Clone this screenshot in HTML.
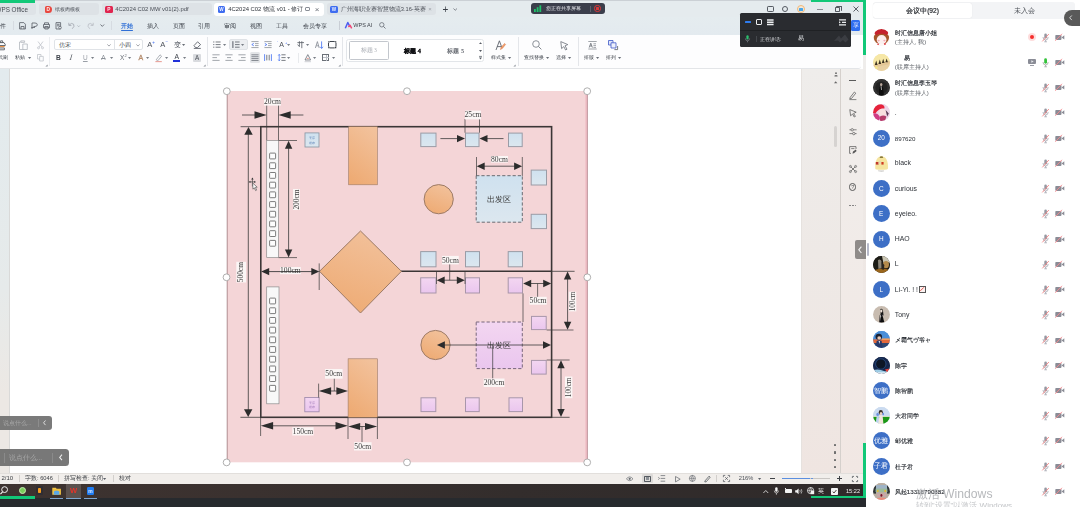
<!DOCTYPE html>
<html lang="zh"><head><meta charset="utf-8"><title>WPS - screen share</title>
<style>
html,body{margin:0;padding:0;}
body{width:1080px;height:507px;overflow:hidden;position:relative;background:#fff;font-family:"Liberation Sans", sans-serif;}
div,svg,span.a{position:absolute;box-sizing:border-box;}
svg{overflow:visible;}
.t{white-space:nowrap;}
#root{left:0;top:0;width:1080px;height:507px;filter:blur(0.5px);}
</style></head><body><div id="root">
<div style="left:-10px;top:-10px;width:873px;height:27px;background:#e5ebee;"></div><div style="left:-10px;top:17px;width:873px;height:17.5px;background:linear-gradient(#e5ecef,#e3eaef);"></div><div style="left:-10px;top:34.5px;width:871px;height:34.5px;background:#fdfdfe;border-bottom:1px solid #e3e5e8;border-radius:0 0 3px 0;"></div><div style="left:-10px;top:69px;width:873px;height:404px;background:#ffffff;"></div><div style="left:-10px;top:69px;width:20px;height:404px;background:linear-gradient(#e3ebee,#e6eaea 55%,#ece8e4 80%,#ece8e4);border-right:1px solid #d9d9d8;"></div><div style="left:801px;top:69px;width:39px;height:404px;background:linear-gradient(#efedeb,#eee9e6 45%,#efe5e1);border-left:1px solid #e6e2df;"></div><div style="left:839.5px;top:69px;width:23.5px;height:404px;background:linear-gradient(#f1efed,#f1ebe8 45%,#f1e7e3);border-left:1px solid #d5d0cc;"></div><div style="left:863px;top:55px;width:3px;height:390px;background:linear-gradient(#efedeb,#eee8e5 45%,#efe5e1);"></div><div style="left:-10px;top:2.9px;width:45.8px;height:12.6px;background:#dee3e7;border-radius:0 3px 3px 0;"></div><div class="t" style="top:4.65px;height:9.3px;line-height:9.3px;font-size:6.3px;color:#454a52;white-space:nowrap;left:-4.5px;">WPS Office</div><div style="left:39.2px;top:2.9px;width:59.5px;height:12.6px;background:#dde2e6;border-radius:3px;"></div><div style="left:45px;top:5.6px;width:6.6px;height:7.8px;background:#e8473f;border-radius:1.5px 3.5px 3.5px 1.5px;"></div><div class="t" style="top:5.70px;height:7.8px;line-height:7.8px;font-size:4.8px;color:#ffe9e6;white-space:nowrap;font-weight:bold;left:48.3px;transform:translateX(-50%);">D</div><div class="t" style="top:5.30px;height:8.4px;line-height:8.4px;font-size:5.4px;color:#4a4f57;white-space:nowrap;left:55px;">纸板肉模板</div><div style="left:101.8px;top:2.9px;width:110.2px;height:12.6px;background:#dde2e6;border-radius:3px;"></div><div style="left:105px;top:5.5px;width:7.5px;height:7.9px;background:#e0254f;border-radius:1.5px;"></div><div class="t" style="top:5.70px;height:7.8px;line-height:7.8px;font-size:4.8px;color:#ffe3ea;white-space:nowrap;font-weight:bold;left:108.8px;transform:translateX(-50%);">P</div><div class="t" style="top:5.05px;height:8.9px;line-height:8.9px;font-size:5.9px;color:#4a4f57;white-space:nowrap;left:115.3px;">4C2024 C02 MW v01(2).pdf</div><div style="left:214.2px;top:3px;width:110px;height:13.2px;background:#ffffff;border-radius:3px;"></div><div style="left:217.5px;top:5.8px;width:7.5px;height:7.4px;background:#3f6df0;border-radius:1.5px;"></div><div class="t" style="top:5.80px;height:7.6px;line-height:7.6px;font-size:4.6px;color:#eef2ff;white-space:nowrap;font-weight:bold;left:221.3px;transform:translateX(-50%);">W</div><div class="t" style="top:5.05px;height:8.9px;line-height:8.9px;font-size:5.9px;color:#2f343b;white-space:nowrap;left:228.3px;">4C2024 C02 物流 v01 - 修订</div><div style="left:305px;top:7px;width:4.5px;height:4px;border:0.7px solid #8a8f97;border-radius:1px;"></div><div class="t" style="top:3.80px;height:11px;line-height:11px;font-size:8px;color:#6a6f77;white-space:nowrap;left:317px;transform:translateX(-50%);">×</div><div style="left:326.7px;top:2.9px;width:109.6px;height:12.6px;background:#dde2e6;border-radius:3px;"></div><div style="left:330px;top:5.8px;width:7.5px;height:7.4px;background:#3f6df0;border-radius:1.5px;"></div><div class="t" style="top:5.80px;height:7.6px;line-height:7.6px;font-size:4.6px;color:#eef2ff;white-space:nowrap;font-weight:bold;left:333.8px;transform:translateX(-50%);">W</div><div class="t" style="top:5.15px;height:8.7px;line-height:8.7px;font-size:5.7px;color:#4a4f57;white-space:nowrap;left:340.8px;">广州海职业赛智慧物流3.16-英赛</div><div class="t" style="top:4.80px;height:9px;line-height:9px;font-size:6px;color:#9a9fa7;white-space:nowrap;left:430px;transform:translateX(-50%);">×</div><div class="t" style="top:2.50px;height:13px;line-height:13px;font-size:10px;color:#3a3f47;white-space:nowrap;left:445.5px;transform:translateX(-50%);">+</div><svg style="left:452.5px;top:8px;" width="4.5" height="3" viewBox="0 0 4.5 3"><path d="M0.5 0.5 L2.2 2.3 L4 0.5" fill="none" stroke="#6a6f77" stroke-width="0.8"/></svg><div style="left:530.8px;top:3px;width:74px;height:11px;background:#3b3e4b;border-radius:3px;"></div><svg style="left:534px;top:5px;" width="8" height="7" viewBox="0 0 8 7"><rect x="0" y="4" width="1.8" height="3" fill="#1fc26b"/><rect x="2.7" y="2.2" width="1.8" height="4.8" fill="#1fc26b"/><rect x="5.4" y="0.3" width="1.8" height="6.7" fill="#1fc26b"/></svg><div class="t" style="top:4.40px;height:8.2px;line-height:8.2px;font-size:5.2px;color:#e8e9ee;white-space:nowrap;left:546.3px;">您正在共享屏幕</div><div style="left:590px;top:5.5px;width:0.6px;height:6px;background:#5d606c;"></div><div style="left:594.3px;top:5.3px;width:6.4px;height:6.4px;border:0.9px solid #d9383a;border-radius:50%;"></div><div style="left:596.3px;top:7.3px;width:2.4px;height:2.4px;background:#d9383a;border-radius:0.5px;"></div><div style="left:767px;top:5.5px;width:6.8px;height:6.8px;border:0.8px solid #555a62;border-top-width:1.4px;border-radius:1.2px;"></div><div style="left:781.6px;top:5.6px;width:6.8px;height:6.8px;border:0.8px solid #555a62;border-radius:50%;"></div><div style="left:796.5px;top:5px;width:8px;height:8px;background:#f5e7d6;border:0.7px solid #f0b878;border-radius:50%;"></div><div style="left:798.5px;top:7.5px;width:4px;height:3px;background:#49a7e8;border-radius:0.5px;"></div><div style="left:816.8px;top:8.6px;width:6px;height:0.8px;background:#8a8f97;"></div><div style="left:834.8px;top:7.2px;width:5.2px;height:5px;border:0.8px solid #555a62;border-radius:0.8px;"></div><div style="left:836.4px;top:5.8px;width:5.2px;height:5px;border-top:0.8px solid #555a62;border-right:0.8px solid #555a62;border-radius:0.8px;"></div><svg style="left:853px;top:6px;" width="6" height="6" viewBox="0 0 6 6"><path d="M0.5 0.5 L5.5 5.5 M5.5 0.5 L0.5 5.5" stroke="#4a4f57" stroke-width="0.9" fill="none"/></svg><div class="t" style="top:21.15px;height:9.3px;line-height:9.3px;font-size:6.3px;color:#3a3f47;white-space:nowrap;left:-6px;">文件</div><div style="left:13.3px;top:21px;width:0.6px;height:9px;background:#d6dbe1;"></div><svg style="left:19.0px;top:21.8px;" width="7" height="7.6" viewBox="0 0 7 7.6"><path d="M0.6 0.6 H4.8 L6.4 2.2 V7 H0.6 Z M2 7 V4.5 H5 V7" fill="none" stroke="#555a63" stroke-width="0.8"/></svg><svg style="left:30.5px;top:21.8px;" width="7" height="7.6" viewBox="0 0 7 7.6"><path d="M1 7 V1 H4 Q6.3 1 6.3 2.8 Q6.3 4.5 4 4.5 H2.5 M0.3 5.5 H4" fill="none" stroke="#555a63" stroke-width="0.8"/></svg><svg style="left:42.8px;top:21.8px;" width="7" height="7.6" viewBox="0 0 7 7.6"><path d="M1.5 2.5 V0.8 H5.5 V2.5 M0.5 2.5 H6.5 V5.8 H0.5 Z M1.8 4.5 H5.2 V7 H1.8 Z" fill="none" stroke="#555a63" stroke-width="0.8"/></svg><svg style="left:54.8px;top:21.8px;" width="7" height="7.6" viewBox="0 0 7 7.6"><path d="M1 0.6 H5.6 V7 H1 Z M2 2.3 H4.6 M2 3.8 H4.6" fill="none" stroke="#555a63" stroke-width="0.8"/><circle cx="5" cy="5.6" r="1.3" fill="#e8edf1" stroke="#555a63" stroke-width="0.7"/></svg><svg style="left:68px;top:21.8px;" width="7" height="7.6" viewBox="0 0 7 7.6"><path d="M0.8 0.8 V3.4 H3.4 M1 3.2 Q3.6 0.2 5.6 2.2 Q7 4.4 4.2 6.8" fill="none" stroke="#a3a8b0" stroke-width="0.85"/></svg><svg style="left:76.5px;top:24.7px;" width="3.4" height="2.4" viewBox="0 0 3.4 2.4"><path d="M0.4 0.4 L1.7 1.8 L3 0.4" fill="none" stroke="#a9aeb6" stroke-width="0.7"/></svg><svg style="left:86.6px;top:21.8px;" width="7" height="7.6" viewBox="0 0 7 7.6"><path d="M6.2 0.8 V3.4 H3.6 M6 3.2 Q3.4 0.2 1.4 2.2 Q0 4.4 2.8 6.8" fill="none" stroke="#b9bec5" stroke-width="0.85"/></svg><svg style="left:99.5px;top:24.3px;" width="4.6" height="3" viewBox="0 0 4.6 3"><path d="M0.5 0.5 L2.3 2.4 L4.1 0.5" fill="none" stroke="#555a63" stroke-width="0.8"/></svg><div style="left:111px;top:21px;width:0.6px;height:9px;background:#d6dbe1;"></div><div class="t" style="top:21.15px;height:9.3px;line-height:9.3px;font-size:6.3px;color:#2f6fd6;white-space:nowrap;font-weight:bold;left:121.3px;">开始</div><div style="left:121.3px;top:30.3px;width:11.8px;height:1px;background:#2f6fd6;border-radius:0.5px;"></div><div class="t" style="top:21.20px;height:9.2px;line-height:9.2px;font-size:6.2px;color:#3a3f47;white-space:nowrap;left:147px;">插入</div><div class="t" style="top:21.20px;height:9.2px;line-height:9.2px;font-size:6.2px;color:#3a3f47;white-space:nowrap;left:172.5px;">页面</div><div class="t" style="top:21.20px;height:9.2px;line-height:9.2px;font-size:6.2px;color:#3a3f47;white-space:nowrap;left:198.3px;">引用</div><div class="t" style="top:21.20px;height:9.2px;line-height:9.2px;font-size:6.2px;color:#3a3f47;white-space:nowrap;left:224.2px;">审阅</div><div class="t" style="top:21.20px;height:9.2px;line-height:9.2px;font-size:6.2px;color:#3a3f47;white-space:nowrap;left:250.3px;">视图</div><div class="t" style="top:21.20px;height:9.2px;line-height:9.2px;font-size:6.2px;color:#3a3f47;white-space:nowrap;left:276.2px;">工具</div><div class="t" style="top:21.20px;height:9.2px;line-height:9.2px;font-size:6.2px;color:#3a3f47;white-space:nowrap;left:302.5px;">会员专享</div><div style="left:339px;top:21px;width:0.6px;height:9px;background:#c9ced5;"></div><svg style="left:344.5px;top:22.3px;" width="7" height="6.6" viewBox="0 0 7 6.6"><path d="M0.3 6.3 L2.8 0.5 L4.4 3.6" fill="none" stroke="#4b5cf0" stroke-width="1.5" stroke-linejoin="round"/><path d="M3.4 5 L5 3.2 L6.7 6.3" fill="none" stroke="#ef4a78" stroke-width="1.5" stroke-linejoin="round"/></svg><div class="t" style="top:21.35px;height:8.5px;line-height:8.5px;font-size:5.5px;color:#3a3f47;white-space:nowrap;left:353.3px;">WPS AI</div><svg style="left:379.3px;top:22.3px;" width="7" height="7" viewBox="0 0 7 7"><circle cx="2.8" cy="2.8" r="2.2" fill="none" stroke="#6a6f77" stroke-width="0.8"/><path d="M4.4 4.4 L6.5 6.5" stroke="#6a6f77" stroke-width="0.9"/></svg><svg style="left:-2px;top:39.5px;" width="9" height="10" viewBox="0 0 9 10"><path d="M0 2.6 H6 L7.2 4.4 V5.6 H0" fill="none" stroke="#4a4f57" stroke-width="0.9"/><path d="M0 6.6 H6.6" stroke="#e8924a" stroke-width="1.2"/><path d="M0 8 H6.4 V9.8 H0" fill="none" stroke="#4a4f57" stroke-width="0.8"/><path d="M2.6 2.4 V0.8 H4.6 V2.4" fill="none" stroke="#4a4f57" stroke-width="0.8"/></svg><div class="t" style="top:53.40px;height:8.4px;line-height:8.4px;font-size:5.4px;color:#3a3f47;white-space:nowrap;left:-6.6px;">格式刷</div><svg style="left:18.5px;top:39.5px;" width="9" height="10" viewBox="0 0 9 10"><path d="M1.5 2 H0.5 V9.5 H5 M1.8 2.4 V0.9 H5.6 V2.4 Z" fill="none" stroke="#b3b7be" stroke-width="0.8"/><path d="M3.8 4 H8.3 V9.5 H3.8 Z" fill="#fbfcfd" stroke="#b3b7be" stroke-width="0.8"/></svg><div class="t" style="top:53.40px;height:8.4px;line-height:8.4px;font-size:5.4px;color:#3a3f47;white-space:nowrap;left:15.3px;">粘贴</div><svg style="left:27.7px;top:57.0px;" width="3.2" height="2.2" viewBox="0 0 3.2 2.2"><path d="M0 0 H3.2 L1.6 2 Z" fill="#6a6f77"/></svg><svg style="left:36.5px;top:40.5px;" width="7" height="8" viewBox="0 0 7 8"><path d="M1 0.5 L5 6 M6 0.5 L2 6" stroke="#b9bdc4" stroke-width="0.7" fill="none"/><circle cx="1.5" cy="6.8" r="1" fill="none" stroke="#b9bdc4" stroke-width="0.7"/><circle cx="5.5" cy="6.8" r="1" fill="none" stroke="#b9bdc4" stroke-width="0.7"/></svg><svg style="left:36.7px;top:54px;" width="7" height="7.5" viewBox="0 0 7 7.5"><path d="M0.5 0.5 H4 V5 H0.5 Z" fill="none" stroke="#b9bdc4" stroke-width="0.7"/><path d="M2.6 2.4 H6.3 V7 H2.6 Z" fill="#fbfcfd" stroke="#b9bdc4" stroke-width="0.7"/></svg><svg style="left:44.5px;top:63.5px;" width="3" height="3" viewBox="0 0 3 3"><path d="M2.6 0.4 V2.6 H0.4 Z" fill="#8a8f97"/></svg><div style="left:49px;top:37px;width:0.6px;height:29px;background:#ebedf0;"></div><div style="left:53.7px;top:39px;width:89px;height:11.2px;background:#ffffff;border:0.8px solid #e0e3e7;border-radius:2px;"></div><div style="left:114px;top:39.4px;width:0.7px;height:10.4px;background:#e0e3e7;"></div><div class="t" style="top:40.50px;height:8.6px;line-height:8.6px;font-size:5.6px;color:#3a3f47;white-space:nowrap;left:58.7px;">仿宋</div><div class="t" style="top:40.50px;height:8.6px;line-height:8.6px;font-size:5.6px;color:#3a3f47;white-space:nowrap;left:118.7px;">小四</div><svg style="left:107.2px;top:43.599999999999994px;" width="4" height="2.6" viewBox="0 0 4 2.6"><path d="M0.4 0.4 L2 2.1 L3.6 0.4" fill="none" stroke="#7a7f87" stroke-width="0.7"/></svg><svg style="left:135.6px;top:43.599999999999994px;" width="4" height="2.6" viewBox="0 0 4 2.6"><path d="M0.4 0.4 L2 2.1 L3.6 0.4" fill="none" stroke="#7a7f87" stroke-width="0.7"/></svg><div class="t" style="top:39.75px;height:10.5px;line-height:10.5px;font-size:7.5px;color:#4a4f58;white-space:nowrap;left:147.2px;">A</div><div class="t" style="top:38.55px;height:7.5px;line-height:7.5px;font-size:4.5px;color:#3f6df0;white-space:nowrap;left:152.3px;">+</div><div class="t" style="top:39.75px;height:10.5px;line-height:10.5px;font-size:7.5px;color:#4a4f58;white-space:nowrap;left:160.3px;">A</div><div class="t" style="top:38.05px;height:7.5px;line-height:7.5px;font-size:4.5px;color:#3f6df0;white-space:nowrap;left:165.5px;">−</div><div class="t" style="top:40.05px;height:9.5px;line-height:9.5px;font-size:6.5px;color:#4a4f58;white-space:nowrap;left:174px;">变</div><svg style="left:181.9px;top:44.4px;" width="3.2" height="2.2" viewBox="0 0 3.2 2.2"><path d="M0 0 H3.2 L1.6 2 Z" fill="#6a6f77"/></svg><svg style="left:192.7px;top:41px;" width="8.5" height="8" viewBox="0 0 8.5 8"><path d="M1 4.6 L4.6 0.8 L7.6 3.6 L4.4 6.6 H2.6 Z M0.8 7.4 H7.8" fill="none" stroke="#555a63" stroke-width="0.85"/></svg><div class="t" style="top:52.80px;height:9.6px;line-height:9.6px;font-size:6.6px;color:#3c4149;white-space:nowrap;font-weight:bold;left:58.3px;transform:translateX(-50%);">B</div><div class="t" style="top:52.10px;height:11px;line-height:11px;font-size:8px;color:#5a5f67;white-space:nowrap;font-family:'Liberation Serif', serif;left:71.3px;transform:translateX(-50%);transform:translateX(-50%) skewX(-16deg);">I</div><div class="t" style="top:52.85px;height:9.5px;line-height:9.5px;font-size:6.5px;color:#9a9fa7;white-space:nowrap;left:85.3px;transform:translateX(-50%);text-decoration:underline;">U</div><svg style="left:90.9px;top:57.0px;" width="3.2" height="2.2" viewBox="0 0 3.2 2.2"><path d="M0 0 H3.2 L1.6 2 Z" fill="#7a7f87"/></svg><div class="t" style="top:52.85px;height:9.5px;line-height:9.5px;font-size:6.5px;color:#8a8f97;white-space:nowrap;left:103.3px;transform:translateX(-50%);text-decoration:line-through;">A</div><svg style="left:109.7px;top:57.0px;" width="3.2" height="2.2" viewBox="0 0 3.2 2.2"><path d="M0 0 H3.2 L1.6 2 Z" fill="#7a7f87"/></svg><div class="t" style="top:53.15px;height:9.5px;line-height:9.5px;font-size:6.5px;color:#6a6f77;white-space:nowrap;left:120px;">X</div><div class="t" style="top:52.10px;height:7px;line-height:7px;font-size:4px;color:#6a6f77;white-space:nowrap;left:124.4px;">2</div><svg style="left:128.1px;top:57.0px;" width="3.2" height="2.2" viewBox="0 0 3.2 2.2"><path d="M0 0 H3.2 L1.6 2 Z" fill="#7a7f87"/></svg><div class="t" style="top:52.60px;height:10px;line-height:10px;font-size:7px;color:#9a8f8a;white-space:nowrap;left:140.8px;transform:translateX(-50%);-webkit-text-stroke:0.3px #c08a60;">A</div><svg style="left:146.4px;top:57.0px;" width="3.2" height="2.2" viewBox="0 0 3.2 2.2"><path d="M0 0 H3.2 L1.6 2 Z" fill="#7a7f87"/></svg><svg style="left:155.3px;top:53.8px;" width="8" height="8" viewBox="0 0 8 8"><path d="M1.2 5.8 L5 0.8 L6.6 2.2 L2.8 6.8 Z" fill="none" stroke="#9a9fa7" stroke-width="0.8"/><path d="M0.4 7.6 H6.8" stroke="#e9a29a" stroke-width="1.1"/></svg><svg style="left:165.1px;top:57.0px;" width="3.2" height="2.2" viewBox="0 0 3.2 2.2"><path d="M0 0 H3.2 L1.6 2 Z" fill="#7a7f87"/></svg><div class="t" style="top:51.90px;height:9.8px;line-height:9.8px;font-size:6.8px;color:#3c4149;white-space:nowrap;left:176.8px;transform:translateX(-50%);">A</div><div style="left:173.3px;top:60.3px;width:7px;height:1.3px;background:#2030d8;"></div><svg style="left:183.1px;top:57.0px;" width="3.2" height="2.2" viewBox="0 0 3.2 2.2"><path d="M0 0 H3.2 L1.6 2 Z" fill="#7a7f87"/></svg><div style="left:193.2px;top:54px;width:7.6px;height:7.6px;background:#d9dbdf;border-radius:1px;"></div><div class="t" style="top:53.05px;height:9.3px;line-height:9.3px;font-size:6.3px;color:#4a4f57;white-space:nowrap;left:197px;transform:translateX(-50%);">A</div><svg style="left:202.5px;top:63.5px;" width="3" height="3" viewBox="0 0 3 3"><path d="M2.6 0.4 V2.6 H0.4 Z" fill="#8a8f97"/></svg><div style="left:206.7px;top:37px;width:0.6px;height:29px;background:#e4e6ea;"></div><svg style="left:212.7px;top:41.199999999999996px;" width="8" height="7.2" viewBox="0 0 8 7.2"><path d="M2.6 1 H7.6 M2.6 3.6 H7.6 M2.6 6.2 H7.6" stroke="#555a63" stroke-width="0.8"/><path d="M0.3 1 H1.3 M0.3 3.6 H1.3 M0.3 6.2 H1.3" stroke="#555a63" stroke-width="1"/></svg><svg style="left:223.1px;top:44.199999999999996px;" width="3.2" height="2.2" viewBox="0 0 3.2 2.2"><path d="M0 0 H3.2 L1.6 2 Z" fill="#7a7f87"/></svg><div style="left:229px;top:38.5px;width:18.5px;height:11.8px;background:#eceef1;border:0.6px solid #dfe2e6;border-radius:2px;"></div><svg style="left:231.8px;top:41.199999999999996px;" width="8" height="7.2" viewBox="0 0 8 7.2"><path d="M3 1 H7.6 M3 3.6 H7.6 M3 6.2 H7.6" stroke="#555a63" stroke-width="0.8"/><path d="M0.9 0.2 V7" stroke="#555a63" stroke-width="1"/></svg><svg style="left:241.4px;top:44.199999999999996px;" width="3.2" height="2.2" viewBox="0 0 3.2 2.2"><path d="M0 0 H3.2 L1.6 2 Z" fill="#7a7f87"/></svg><svg style="left:250.7px;top:41.199999999999996px;" width="8" height="7.2" viewBox="0 0 8 7.2"><path d="M0.4 0.6 H7.6 M4 2.6 H7.6 M4 4.6 H7.6 M0.4 6.6 H7.6" stroke="#8a8f97" stroke-width="0.8"/><path d="M2.8 2.4 L0.8 3.6 L2.8 4.8" fill="none" stroke="#3f6df0" stroke-width="0.8"/></svg><svg style="left:263.5px;top:41.199999999999996px;" width="8" height="7.2" viewBox="0 0 8 7.2"><path d="M0.4 0.6 H7.6 M4 2.6 H7.6 M4 4.6 H7.6 M0.4 6.6 H7.6" stroke="#8a8f97" stroke-width="0.8"/><path d="M0.8 2.4 L2.8 3.6 L0.8 4.8" fill="none" stroke="#3f6df0" stroke-width="0.8"/></svg><div class="t" style="top:39.80px;height:10px;line-height:10px;font-size:7px;color:#4a4f58;white-space:nowrap;left:281.7px;transform:translateX(-50%);">A</div><div class="t" style="top:38.80px;height:7px;line-height:7px;font-size:4px;color:#3f6df0;white-space:nowrap;left:277.3px;">'</div><div class="t" style="top:38.80px;height:7px;line-height:7px;font-size:4px;color:#3f6df0;white-space:nowrap;left:285px;">+</div><svg style="left:287.4px;top:44.199999999999996px;" width="3.2" height="2.2" viewBox="0 0 3.2 2.2"><path d="M0 0 H3.2 L1.6 2 Z" fill="#7a7f87"/></svg><svg style="left:296.5px;top:41.2px;" width="7.5" height="7.5" viewBox="0 0 7.5 7.5"><path d="M0.4 1.6 H7 M2.4 0.2 V5.6 M4.8 0.2 V7.2 M0.6 3.6 L2.4 5.6" fill="none" stroke="#555a63" stroke-width="0.8"/></svg><svg style="left:305.9px;top:44.199999999999996px;" width="3.2" height="2.2" viewBox="0 0 3.2 2.2"><path d="M0 0 H3.2 L1.6 2 Z" fill="#7a7f87"/></svg><svg style="left:314.5px;top:40.8px;" width="8.5" height="8" viewBox="0 0 8.5 8"><path d="M0.4 7 L2.4 0.6 L4.2 7 M1.2 4.8 H3.6" fill="none" stroke="#8a8f97" stroke-width="0.85"/><path d="M6.6 0.4 V7.4 M5.2 5.8 L6.6 7.4 L8 5.8" fill="none" stroke="#3f6df0" stroke-width="0.8"/></svg><svg style="left:327.8px;top:41.2px;" width="8.5" height="7.4" viewBox="0 0 8.5 7.4"><path d="M1.8 0.5 H6.7 M1.8 6.9 H6.7 M0.5 1.8 V5.6 M8 1.8 V5.6" stroke="#3c4149" stroke-width="1" fill="none"/><path d="M0.2 0.2 H1.6 V1.6 H0.2 Z M6.9 0.2 H8.3 V1.6 H6.9 Z M0.2 5.8 H1.6 V7.2 H0.2 Z M6.9 5.8 H8.3 V7.2 H6.9 Z" fill="#3c4149"/></svg><svg style="left:211.8px;top:54.0px;" width="8" height="7.2" viewBox="0 0 8 7.2"><path d="M0.4 0.8 H7.6 M0.4 3.6 H5 M0.4 6.4 H7.6" stroke="#8a8f97" stroke-width="0.8"/></svg><svg style="left:224.7px;top:54.0px;" width="8" height="7.2" viewBox="0 0 8 7.2"><path d="M0.4 0.8 H7.6 M2 3.6 H6 M0.4 6.4 H7.6" stroke="#8a8f97" stroke-width="0.8"/></svg><svg style="left:237.7px;top:54.0px;" width="8" height="7.2" viewBox="0 0 8 7.2"><path d="M0.4 0.8 H7.6 M3 3.6 H7.6 M0.4 6.4 H7.6" stroke="#8a8f97" stroke-width="0.8"/></svg><div style="left:249.7px;top:52.3px;width:10.3px;height:10.6px;background:#e3e5e8;border-radius:1.5px;"></div><svg style="left:250.8px;top:54.0px;" width="8" height="7.2" viewBox="0 0 8 7.2"><path d="M0.4 0.8 H7.6 M0.4 2.7 H7.6 M0.4 4.6 H7.6 M0.4 6.5 H7.6" stroke="#70757d" stroke-width="0.8"/></svg><svg style="left:263.5px;top:54.0px;" width="8" height="7.2" viewBox="0 0 8 7.2"><path d="M0.6 0.2 V7 M7.4 0.2 V7" stroke="#3f6df0" stroke-width="0.8"/><path d="M2.8 0.8 V6.4 M5.2 0.8 V6.4" stroke="#555a63" stroke-width="0.8"/></svg><svg style="left:277.7px;top:54.0px;" width="8" height="7.2" viewBox="0 0 8 7.2"><path d="M3.4 0.8 H7.6 M3.4 3.6 H7.6 M3.4 6.4 H7.6" stroke="#555a63" stroke-width="0.8"/><path d="M1.2 0.4 V6.8 M0.2 1.6 L1.2 0.4 L2.2 1.6 M0.2 5.6 L1.2 6.8 L2.2 5.6" fill="none" stroke="#3f6df0" stroke-width="0.7"/></svg><svg style="left:287.4px;top:57.0px;" width="3.2" height="2.2" viewBox="0 0 3.2 2.2"><path d="M0 0 H3.2 L1.6 2 Z" fill="#7a7f87"/></svg><div style="left:297.5px;top:53px;width:0.6px;height:9.5px;background:#e8eaed;"></div><svg style="left:304px;top:53.6px;" width="8" height="8.2" viewBox="0 0 8 8.2"><path d="M1 6 L3.8 0.6 L6.6 6 Z" fill="none" stroke="#6a6f77" stroke-width="0.8"/><path d="M2.6 5 Q4 2.6 5 5 Z" fill="#e9a29a"/><path d="M0.6 7.7 H7" stroke="#c8cbd0" stroke-width="0.9"/></svg><svg style="left:313.4px;top:57.0px;" width="3.2" height="2.2" viewBox="0 0 3.2 2.2"><path d="M0 0 H3.2 L1.6 2 Z" fill="#7a7f87"/></svg><div style="left:322.3px;top:54.1px;width:7px;height:7px;border:0.75px solid #6a6f77;"></div><div style="left:325.6px;top:54.6px;width:0.5px;height:6px;background:#b9bdc4;"></div><div style="left:322.8px;top:57.3px;width:6px;height:0.5px;background:#b9bdc4;"></div><svg style="left:331.7px;top:57.0px;" width="3.2" height="2.2" viewBox="0 0 3.2 2.2"><path d="M0 0 H3.2 L1.6 2 Z" fill="#7a7f87"/></svg><svg style="left:337.5px;top:63.5px;" width="3" height="3" viewBox="0 0 3 3"><path d="M2.6 0.4 V2.6 H0.4 Z" fill="#8a8f97"/></svg><div style="left:341.7px;top:37px;width:0.6px;height:29px;background:#e4e6ea;"></div><div style="left:346.3px;top:38.7px;width:138px;height:23.4px;background:#ffffff;border:0.8px solid #e2e5e9;border-radius:2.5px;"></div><div style="left:348.7px;top:41.3px;width:40px;height:18.5px;background:#ffffff;border:1.1px solid #c3c7cd;border-radius:1.5px;"></div><div class="t" style="top:46.30px;height:8.6px;line-height:8.6px;font-size:5.6px;color:#a9adb4;white-space:nowrap;font-family:'Liberation Serif', serif;left:368.7px;transform:translateX(-50%);">标题 3</div><div class="t" style="top:45.90px;height:9.4px;line-height:9.4px;font-size:6.4px;color:#111215;white-space:nowrap;font-weight:bold;font-family:'Liberation Serif', serif;left:412.5px;transform:translateX(-50%);-webkit-text-stroke:0.35px #111215;">标题 4</div><div class="t" style="top:46.00px;height:9.2px;line-height:9.2px;font-size:6.2px;color:#6a6e75;white-space:nowrap;font-weight:bold;font-family:'Liberation Serif', serif;left:455.8px;transform:translateX(-50%);">标题 5</div><svg style="left:479px;top:42.4px;" width="3" height="2.2" viewBox="0 0 3 2.2"><path d="M0 2.1 L1.5 0.2 L3 2.1 Z" fill="#555a63"/></svg><svg style="left:479px;top:49.8px;" width="3" height="2.2" viewBox="0 0 3 2.2"><path d="M0 0.1 L1.5 2 L3 0.1 Z" fill="#555a63"/></svg><svg style="left:479px;top:56px;" width="3" height="4" viewBox="0 0 3 4"><path d="M0 0.4 H3" stroke="#555a63" stroke-width="0.7"/><path d="M0 1.5 L1.5 3.4 L3 1.5 Z" fill="#555a63"/></svg><svg style="left:494.5px;top:39.8px;" width="11" height="10.5" viewBox="0 0 11 10.5"><path d="M1 10 L4.4 0.8 L7 8 M2.2 6.6 H6.2" fill="none" stroke="#555a63" stroke-width="0.85"/><path d="M5.4 9.6 L6.2 7.2 L9.6 3.4 L10.6 4.4 L7.4 8.4 Z" fill="#f0a070" stroke="#d97a48" stroke-width="0.5"/></svg><div class="t" style="top:53.40px;height:8.4px;line-height:8.4px;font-size:5.4px;color:#3a3f47;white-space:nowrap;left:490.5px;">样式集</div><svg style="left:507.9px;top:57.0px;" width="3.2" height="2.2" viewBox="0 0 3.2 2.2"><path d="M0 0 H3.2 L1.6 2 Z" fill="#6a6f77"/></svg><svg style="left:512.5px;top:63.5px;" width="3" height="3" viewBox="0 0 3 3"><path d="M2.6 0.4 V2.6 H0.4 Z" fill="#8a8f97"/></svg><div style="left:517.5px;top:37px;width:0.6px;height:29px;background:#e4e6ea;"></div><svg style="left:532px;top:40.3px;" width="10" height="10" viewBox="0 0 10 10"><circle cx="4" cy="4" r="3.3" fill="none" stroke="#7a7f87" stroke-width="0.85"/><path d="M6.4 6.4 L9.4 9.4" stroke="#7a7f87" stroke-width="0.95"/></svg><div class="t" style="top:53.40px;height:8.4px;line-height:8.4px;font-size:5.4px;color:#3a3f47;white-space:nowrap;left:523.8px;">查找替换</div><svg style="left:546.4px;top:57.0px;" width="3.2" height="2.2" viewBox="0 0 3.2 2.2"><path d="M0 0 H3.2 L1.6 2 Z" fill="#6a6f77"/></svg><svg style="left:559.5px;top:40.5px;" width="9" height="9.5" viewBox="0 0 9 9.5"><path d="M0.8 0.6 L7.8 3.6 L5 4.8 L7 8.2 L5.6 9 L3.8 5.6 L1.6 7.6 Z" fill="none" stroke="#6a6f77" stroke-width="0.8" stroke-linejoin="round"/></svg><div class="t" style="top:53.40px;height:8.4px;line-height:8.4px;font-size:5.4px;color:#3a3f47;white-space:nowrap;left:556.3px;">选择</div><svg style="left:568.4px;top:57.0px;" width="3.2" height="2.2" viewBox="0 0 3.2 2.2"><path d="M0 0 H3.2 L1.6 2 Z" fill="#6a6f77"/></svg><div style="left:577.5px;top:37px;width:0.6px;height:29px;background:#e4e6ea;"></div><svg style="left:587.5px;top:40.5px;" width="9" height="8.5" viewBox="0 0 9 8.5"><path d="M0.3 0.5 H8.7 M0.3 8 H8.7" stroke="#7a7f87" stroke-width="0.7"/><path d="M1.2 6.6 L2.8 2.2 L4.4 6.6 M1.8 5 H3.8" fill="none" stroke="#555a63" stroke-width="0.7"/><path d="M5.4 2.8 H8 M5.4 4.6 H8 M5.4 6.4 H8" stroke="#7a7f87" stroke-width="0.7"/></svg><div class="t" style="top:53.40px;height:8.4px;line-height:8.4px;font-size:5.4px;color:#3a3f47;white-space:nowrap;left:584px;">排版</div><svg style="left:596.1999999999999px;top:57.0px;" width="3.2" height="2.2" viewBox="0 0 3.2 2.2"><path d="M0 0 H3.2 L1.6 2 Z" fill="#6a6f77"/></svg><svg style="left:608.3px;top:40px;" width="10" height="10" viewBox="0 0 10 10"><path d="M0.5 0.5 H5 V5 H0.5 Z" fill="#dfe6fb" stroke="#3f59c8" stroke-width="0.8"/><path d="M3 2.8 H8 V8 H3 Z" fill="#eef1fb" stroke="#3f59c8" stroke-width="0.8"/><path d="M6.4 9.6 H9.6 V6" fill="none" stroke="#555a63" stroke-width="0.8"/></svg><div class="t" style="top:53.40px;height:8.4px;line-height:8.4px;font-size:5.4px;color:#3a3f47;white-space:nowrap;left:605.5px;">排列</div><svg style="left:617.6999999999999px;top:57.0px;" width="3.2" height="2.2" viewBox="0 0 3.2 2.2"><path d="M0 0 H3.2 L1.6 2 Z" fill="#6a6f77"/></svg><div style="left:851px;top:19.5px;width:8.5px;height:11px;background:#2f6ef0;border-radius:1.5px;"></div><div class="t" style="top:20.75px;height:8.5px;line-height:8.5px;font-size:5.5px;color:#eaf0ff;white-space:nowrap;left:855.6px;transform:translateX(-50%);">享</div><div style="left:739.7px;top:13.2px;width:111.6px;height:33.7px;background:#2a2c30;border-radius:1.5px;"></div><div style="left:739.7px;top:30px;width:111.6px;height:0.7px;background:#1f2124;"></div><div style="left:744.5px;top:21.3px;width:6.5px;height:1.6px;background:#2f7df0;border-radius:0.5px;"></div><div style="left:755.7px;top:19px;width:6px;height:6.2px;border:0.9px solid #eceef0;border-top-width:1.8px;border-radius:1px;"></div><svg style="left:766.8px;top:18.8px;" width="6.6" height="6.6" viewBox="0 0 6.6 6.6"><path d="M0 1 H6.6 M0 3.3 H6.6 M0 5.6 H6.6" stroke="#eceef0" stroke-width="1.5"/></svg><svg style="left:839px;top:18.8px;" width="7" height="6.6" viewBox="0 0 7 6.6"><path d="M0 0.8 H7 M3 3.3 H7 M0 5.8 H7" stroke="#eceef0" stroke-width="1.2"/><path d="M0 2.2 V4.4 L1.8 3.3 Z" fill="#eceef0"/></svg><svg style="left:745px;top:35px;" width="5" height="7.5" viewBox="0 0 5 7.5"><rect x="1.4" y="0.2" width="2.2" height="4.4" rx="1.1" fill="#2dbf6e"/><path d="M0.4 3.4 Q0.4 5.8 2.5 5.8 Q4.6 5.8 4.6 3.4 M2.5 5.8 V7.3" fill="none" stroke="#8a8f97" stroke-width="0.6"/></svg><div style="left:755.5px;top:35.5px;width:0.5px;height:6.5px;background:#44474c;"></div><div class="t" style="top:34.50px;height:8.4px;line-height:8.4px;font-size:5.4px;color:#d6d8db;white-space:nowrap;left:760px;">正在讲话:</div><div class="t" style="top:34.40px;height:8.6px;line-height:8.6px;font-size:5.6px;color:#e6e8ea;white-space:nowrap;left:797.5px;">易</div><svg style="left:834px;top:34px;" width="15" height="9" viewBox="0 0 15 9"><path d="M0 7 L5 1.5 L7 4.5 L11 0.5 L14.5 5.5 L11.5 8.5 L9 6 L6 8.5 L4 6.5 Z" fill="#3b3d42"/></svg><div style="left:849.4000000000001px;top:79.6px;width:6.6px;height:0.8px;background:#5a5a5a;"></div><svg style="left:848.7px;top:90.5px;" width="8" height="9" viewBox="0 0 8 9"><path d="M1.2 6.4 L5.4 1 L6.8 2.2 L2.6 7.4 L0.8 7.8 Z" fill="none" stroke="#585858" stroke-width="0.75"/><path d="M0.4 8.6 H7.4" stroke="#585858" stroke-width="0.7"/></svg><svg style="left:848.7px;top:109px;" width="8" height="8.5" viewBox="0 0 8 8.5"><path d="M0.8 0.6 L7.2 3.2 L4.6 4.4 L6.4 7.4 L5.2 8 L3.6 5 L1.6 6.8 Z" fill="none" stroke="#585858" stroke-width="0.75" stroke-linejoin="round"/></svg><svg style="left:848.7px;top:127.8px;" width="8" height="7.5" viewBox="0 0 8 7.5"><path d="M0.4 1.8 H2 M4.4 1.8 H7.6 M0.4 5.6 H3.6 M6 5.6 H7.6" stroke="#585858" stroke-width="0.7"/><circle cx="3.2" cy="1.8" r="1.2" fill="none" stroke="#585858" stroke-width="0.7"/><circle cx="4.8" cy="5.6" r="1.2" fill="none" stroke="#585858" stroke-width="0.7"/></svg><svg style="left:848.7px;top:146px;" width="8" height="8" viewBox="0 0 8 8"><path d="M2 7.4 H0.6 V0.6 H7 V3" fill="none" stroke="#585858" stroke-width="0.75"/><path d="M2.2 2.6 H5.4" stroke="#585858" stroke-width="0.7"/><path d="M3.4 7.6 L4 5.4 L6.8 3.6 L7.6 5 L5 7.2 Z" fill="#585858"/></svg><svg style="left:848.7px;top:164.8px;" width="8" height="8" viewBox="0 0 8 8"><path d="M1.6 1.6 L6.4 6.4 M6.4 1.6 L1.6 6.4" stroke="#585858" stroke-width="0.75"/><circle cx="1.4" cy="1.4" r="1" fill="none" stroke="#585858" stroke-width="0.65"/><circle cx="6.6" cy="1.4" r="1" fill="none" stroke="#585858" stroke-width="0.65"/><circle cx="1.4" cy="6.6" r="1" fill="none" stroke="#585858" stroke-width="0.65"/><circle cx="6.6" cy="6.6" r="1" fill="none" stroke="#585858" stroke-width="0.65"/></svg><div style="left:848.9000000000001px;top:183.2px;width:7.6px;height:7.6px;border:0.75px solid #585858;border-radius:50%;"></div><div class="t" style="top:182.85px;height:8.5px;line-height:8.5px;font-size:5.5px;color:#585858;white-space:nowrap;left:852.7px;transform:translateX(-50%);">?</div><div style="left:849.1px;top:204.8px;width:1.5px;height:1.5px;background:#777;border-radius:50%;"></div><div style="left:852.0px;top:204.8px;width:1.5px;height:1.5px;background:#777;border-radius:50%;"></div><div style="left:854.9px;top:204.8px;width:1.5px;height:1.5px;background:#777;border-radius:50%;"></div><svg style="left:833.6px;top:72px;" width="4" height="5" viewBox="0 0 4 5"><circle cx="2" cy="1.2" r="0.9" fill="#666"/><path d="M0.5 4.6 V3.6 Q2 2.2 3.5 3.6 V4.6 Z" fill="#666"/></svg><svg style="left:833.9px;top:81px;" width="3.4" height="2.4" viewBox="0 0 3.4 2.4"><path d="M0 2.2 L1.7 0.2 L3.4 2.2 Z" fill="#666"/></svg><div style="left:834px;top:125.6px;width:3.4px;height:21.2px;background:#d6d3d1;border-radius:1.7px;"></div><div style="left:834.4px;top:443.6px;width:1.3px;height:2.2px;background:#6f6f6f;border-radius:0.6px;"></div><div style="left:834.4px;top:451.4px;width:1.3px;height:2.2px;background:#6f6f6f;border-radius:0.6px;"></div><div style="left:834.4px;top:458.8px;width:1.3px;height:2.2px;background:#6f6f6f;border-radius:0.6px;"></div><div style="left:834.4px;top:466px;width:1.3px;height:2.2px;background:#6f6f6f;border-radius:0.6px;"></div><div style="left:854.6px;top:239.8px;width:11.2px;height:19px;background:#8f8b89;border-radius:2px 0 0 2px;"></div><svg style="left:857.5px;top:245.5px;" width="4" height="7.6" viewBox="0 0 4 7.6"><path d="M3.4 0.6 L0.8 3.8 L3.4 7" fill="none" stroke="#f2f2f2" stroke-width="1.1"/></svg><div style="left:-10px;top:415.8px;width:61.7px;height:13.8px;background:#707070;border-radius:3px;opacity:0.93;"></div><div class="t" style="top:418.50px;height:8.6px;line-height:8.6px;font-size:5.6px;color:#a8a8a8;white-space:nowrap;left:2.8px;">说点什么...</div><div style="left:37.5px;top:418.5px;width:0.5px;height:8.5px;background:#8d8d8d;"></div><svg style="left:43px;top:420px;" width="3" height="5.6" viewBox="0 0 3 5.6"><path d="M2.5 0.5 L0.6 2.8 L2.5 5.1" fill="none" stroke="#e8e8e8" stroke-width="0.9"/></svg><div style="left:-10px;top:449px;width:79px;height:17px;background:#6e6e6e;border-radius:3.5px;opacity:0.93;"></div><div style="left:3.5px;top:452.5px;width:0.5px;height:10px;background:#8a8a8a;"></div><div class="t" style="top:452.90px;height:9.8px;line-height:9.8px;font-size:6.8px;color:#a6a6a6;white-space:nowrap;left:8.6px;">说点什么...</div><div style="left:51.8px;top:452.5px;width:0.5px;height:10px;background:#8a8a8a;"></div><svg style="left:58.8px;top:454.3px;" width="3.6" height="6.8" viewBox="0 0 3.6 6.8"><path d="M3 0.6 L0.7 3.4 L3 6.2" fill="none" stroke="#ededed" stroke-width="1.05"/></svg><div style="left:-10px;top:473px;width:873px;height:11.3px;background:#f1eeeb;border-top:0.6px solid #e2dfdc;"></div><div class="t" style="top:474.20px;height:9px;line-height:9px;font-size:6px;color:#3f4247;white-space:nowrap;left:1.5px;">2/10</div><div style="left:18.5px;top:475.3px;width:0.5px;height:7px;background:#d2cfcc;"></div><div class="t" style="top:474.35px;height:8.7px;line-height:8.7px;font-size:5.7px;color:#3f4247;white-space:nowrap;left:25px;">字数: 6046</div><div style="left:57.8px;top:475.3px;width:0.5px;height:7px;background:#d2cfcc;"></div><div class="t" style="top:474.35px;height:8.7px;line-height:8.7px;font-size:5.7px;color:#3f4247;white-space:nowrap;left:63.9px;">拼写检查: 关闭</div><svg style="left:102.9px;top:478.1px;" width="3.2" height="2.2" viewBox="0 0 3.2 2.2"><path d="M0 0 H3.2 L1.6 2 Z" fill="#5a5f67"/></svg><div style="left:113px;top:475.3px;width:0.5px;height:7px;background:#d2cfcc;"></div><div class="t" style="top:474.35px;height:8.7px;line-height:8.7px;font-size:5.7px;color:#3f4247;white-space:nowrap;left:119px;">校对</div><svg style="left:625.5px;top:475.8px;" width="7.4" height="5.6" viewBox="0 0 7.4 5.6"><path d="M0.4 2.8 Q3.7 -1 7 2.8 Q3.7 6.6 0.4 2.8 Z" fill="none" stroke="#666a70" stroke-width="0.7"/><circle cx="3.7" cy="2.8" r="1.1" fill="#666a70"/></svg><div style="left:642px;top:474.2px;width:11px;height:9.2px;background:#dcdad8;border-radius:1px;"></div><div style="left:644.3px;top:475.6px;width:6.4px;height:6.4px;border:0.8px solid #555a60;border-radius:0.8px;"></div><div style="left:646px;top:477.4px;width:3px;height:2.6px;background:#8a8f95;"></div><svg style="left:658.3px;top:475.4px;" width="7.4" height="6.8" viewBox="0 0 7.4 6.8"><path d="M2.6 0.6 H7.2 M2.6 3.4 H7.2 M2.6 6.2 H7.2" stroke="#666a70" stroke-width="0.75"/><path d="M0.2 2.2 L1.6 3.4 L0.2 4.6" fill="none" stroke="#666a70" stroke-width="0.7"/></svg><svg style="left:674.8px;top:475.6px;" width="5.6" height="6.4" viewBox="0 0 5.6 6.4"><path d="M0.5 0.5 L5.2 3.2 L0.5 5.9 Z" fill="none" stroke="#666a70" stroke-width="0.75" stroke-linejoin="round"/></svg><svg style="left:688.6px;top:475.4px;" width="6.8" height="6.8" viewBox="0 0 6.8 6.8"><circle cx="3.4" cy="3.4" r="3" fill="none" stroke="#666a70" stroke-width="0.7"/><path d="M0.4 3.4 H6.4 M3.4 0.4 Q1.2 3.4 3.4 6.4 Q5.6 3.4 3.4 0.4" fill="none" stroke="#666a70" stroke-width="0.6"/></svg><svg style="left:703.6px;top:475.3px;" width="7" height="7" viewBox="0 0 7 7"><path d="M1 5.9 L5 1.2 L6.2 2.2 L2.2 6.8 L0.8 6.9 Z" fill="none" stroke="#555a60" stroke-width="0.8"/></svg><div style="left:716px;top:475.3px;width:0.5px;height:7px;background:#d2cfcc;"></div><svg style="left:722.5px;top:475.3px;" width="7" height="7" viewBox="0 0 7 7"><path d="M0.4 2.2 V0.4 H2.2 M4.8 0.4 H6.6 V2.2 M6.6 4.8 V6.6 H4.8 M2.2 6.6 H0.4 V4.8 M2.2 2.2 L4.8 4.8 M4.8 2.2 L2.2 4.8" fill="none" stroke="#555a60" stroke-width="0.75"/></svg><div class="t" style="top:474.35px;height:8.7px;line-height:8.7px;font-size:5.7px;color:#4a4f57;white-space:nowrap;left:746px;transform:translateX(-50%);">216%</div><svg style="left:758.4px;top:478.1px;" width="3.2" height="2.2" viewBox="0 0 3.2 2.2"><path d="M0 0 H3.2 L1.6 2 Z" fill="#5a5f67"/></svg><div style="left:770px;top:478.1px;width:5px;height:0.9px;background:#3f4247;"></div><div style="left:782px;top:478.3px;width:48px;height:0.7px;background:#c9c6c3;"></div><div style="left:782px;top:478.1px;width:28px;height:1px;background:#5b8fe0;"></div><div style="left:811.3px;top:477.6px;width:1.6px;height:1.8px;background:#5b8fe0;border-radius:50%;"></div><div style="left:837px;top:478.2px;width:5px;height:0.9px;background:#3f4247;"></div><div style="left:839.05px;top:476.2px;width:0.9px;height:5px;background:#3f4247;"></div><svg style="left:851.5px;top:475.5px;" width="6" height="6" viewBox="0 0 6 6"><path d="M0.4 2 V0.4 H2 M4 0.4 H5.6 V2 M5.6 4 V5.6 H4 M2 5.6 H0.4 V4" fill="none" stroke="#555a60" stroke-width="0.8"/></svg><div style="left:-10px;top:484.3px;width:876px;height:14px;background:linear-gradient(90deg,#3e3330,#3a312f 30%,#332d2c 60%,#2f2a2a);"></div><div style="left:-10px;top:498.2px;width:876px;height:20px;background:#272a2e;"></div><div style="left:65.7px;top:484.3px;width:15.8px;height:14px;background:#5b514e;"></div><svg style="left:0px;top:486.3px;" width="8" height="9" viewBox="0 0 8 9"><circle cx="4.6" cy="3.6" r="2.9" fill="none" stroke="#f2f2f2" stroke-width="1"/><path d="M2.6 5.8 L0.4 8.2" stroke="#f2f2f2" stroke-width="1.1"/></svg><div style="left:18.7px;top:487.2px;width:7.2px;height:7.2px;background:#7ad05a;border:0.8px solid #c6ecb4;border-radius:50%;"></div><div style="left:36.2px;top:486.4px;width:6.4px;height:8.4px;background:#2f2d33;border-radius:0.8px;"></div><div style="left:37.6px;top:488px;width:3.4px;height:5px;background:#f39a1e;border-radius:0.8px;"></div><svg style="left:52px;top:487px;" width="9.2" height="8" viewBox="0 0 9.2 8"><path d="M0.3 0.8 H3.8 L4.6 1.8 H8.9 V7.7 H0.3 Z" fill="#f3c545"/><path d="M1.8 7.7 V4.6 Q4.6 2.6 7.4 4.6 V7.7 Z" fill="#5aa7e8"/><path d="M0.3 3 H8.9" stroke="#e0aa28" stroke-width="0.6"/></svg><div class="t" style="top:486.00px;height:10.6px;line-height:10.6px;font-size:7.6px;color:#e5342a;white-space:nowrap;font-weight:bold;left:73.7px;transform:translateX(-50%);">W</div><div style="left:86.6px;top:487.1px;width:7.8px;height:7.6px;background:#1f7cf2;border-radius:1.2px;"></div><div class="t" style="top:487.00px;height:8px;line-height:8px;font-size:5px;color:#dfeaff;white-space:nowrap;font-weight:bold;left:90.5px;transform:translateX(-50%);">m</div><div style="left:50px;top:497.6px;width:13px;height:0.9px;background:#7ea6cf;"></div><div style="left:65.7px;top:497.6px;width:15.799999999999997px;height:0.9px;background:#7ea6cf;"></div><div style="left:84.3px;top:497.6px;width:12.900000000000006px;height:0.9px;background:#7ea6cf;"></div><svg style="left:763.3px;top:489.5px;" width="5.6" height="3.4" viewBox="0 0 5.6 3.4"><path d="M0.4 3 L2.8 0.5 L5.2 3" fill="none" stroke="#eee" stroke-width="0.8"/></svg><svg style="left:773.7px;top:487px;" width="4.8" height="8" viewBox="0 0 4.8 8"><rect x="1.2" y="0.2" width="2.4" height="4.6" rx="1.2" fill="#f2f2f2"/><path d="M0.3 3.6 Q0.3 6 2.4 6 Q4.5 6 4.5 3.6 M2.4 6 V7.8" fill="none" stroke="#f2f2f2" stroke-width="0.6"/></svg><div style="left:784.5px;top:488.7px;width:7px;height:4.6px;background:#f2f2f2;border-radius:0.8px;"></div><div style="left:784.5px;top:488px;width:1.3px;height:1.4px;background:#f2f2f2;"></div><svg style="left:795.3px;top:487.7px;" width="8" height="6.6" viewBox="0 0 8 6.6"><path d="M0.2 2.2 H1.6 L3.6 0.4 V6.2 L1.6 4.4 H0.2 Z" fill="#f2f2f2"/><path d="M4.8 2 Q5.6 3.3 4.8 4.6 M6.2 1 Q7.6 3.3 6.2 5.6" fill="none" stroke="#f2f2f2" stroke-width="0.6"/></svg><svg style="left:806.6px;top:487.4px;" width="7.2" height="7.2" viewBox="0 0 7.2 7.2"><circle cx="3.6" cy="3.6" r="3.1" fill="none" stroke="#f2f2f2" stroke-width="0.8"/><path d="M0.5 3.6 H6.7 M3.6 0.5 Q1.4 3.6 3.6 6.7 Q5.8 3.6 3.6 0.5" fill="none" stroke="#f2f2f2" stroke-width="0.6"/><rect x="4" y="4" width="3.2" height="3.2" fill="#f2f2f2"/></svg><div class="t" style="top:486.90px;height:8.6px;line-height:8.6px;font-size:5.6px;color:#f0f0f0;white-space:nowrap;left:821px;transform:translateX(-50%);">英</div><div style="left:830.5px;top:487.6px;width:7px;height:7px;background:#f4f4f4;border-radius:0.8px;"></div><svg style="left:831.5px;top:488.6px;" width="5" height="5" viewBox="0 0 5 5"><path d="M0.8 2.6 L2 4 L4.4 1" fill="none" stroke="#3a3230" stroke-width="0.9"/></svg><div class="t" style="top:486.90px;height:8.6px;line-height:8.6px;font-size:5.6px;color:#f2f2f2;white-space:nowrap;left:853px;transform:translateX(-50%);">15:22</div><div style="left:-10px;top:-10px;width:44.8px;height:12.6px;background:#12c878;"></div><div style="left:34.8px;top:-10px;width:775.8px;height:10.8px;background:#cbd0d5;"></div><div style="left:863px;top:-10px;width:3px;height:65px;background:#12c878;"></div><div style="left:810.6px;top:-10px;width:55.2px;height:12.4px;background:#12c878;"></div><div style="left:863px;top:442.5px;width:2.8px;height:55.8px;background:#12c878;"></div><div style="left:811px;top:495.6px;width:54.7px;height:2.7px;background:#12c878;"></div><div style="left:-10px;top:495.5px;width:44.8px;height:3.1px;background:#12c878;"></div><svg style="left:0;top:0;" width="866" height="507" viewBox="0 0 866 507"><defs><linearGradient id="og" x1="0.7" y1="0" x2="0.3" y2="1"><stop offset="0" stop-color="#f2c19b"/><stop offset="1" stop-color="#eeab74"/></linearGradient><linearGradient id="bg" x1="0" y1="0" x2="0" y2="1"><stop offset="0" stop-color="#cfe1ef"/><stop offset="1" stop-color="#dce7ef"/></linearGradient><linearGradient id="pg" x1="0" y1="0" x2="0" y2="1"><stop offset="0" stop-color="#f3d6f1"/><stop offset="1" stop-color="#eac6ee"/></linearGradient></defs><rect x="227" y="91" width="360.60" height="371.30" fill="#f4d5d7" /><line x1="227.2" y1="91" x2="227.2" y2="462.3" stroke="#a07c80" stroke-width="0.8"/><rect x="585.4" y="91" width="2.20" height="371.30" fill="#efbcc3" /><line x1="587.4" y1="91" x2="587.4" y2="462.3" stroke="#b48e95" stroke-width="0.8"/><line x1="240.6" y1="126.7" x2="261" y2="126.7" stroke="#3a3a3a" stroke-width="0.8"/><line x1="240.4" y1="417.3" x2="261" y2="417.3" stroke="#3a3a3a" stroke-width="0.8"/><line x1="551" y1="417.3" x2="569.6" y2="417.3" stroke="#3a3a3a" stroke-width="0.8"/><rect x="260.8" y="126.7" width="290.80" height="290.60" fill="none" stroke="#3b3636" stroke-width="1.6" /><line x1="401" y1="271.3" x2="551.6" y2="271.3" stroke="#3b3636" stroke-width="1.6"/><line x1="551.6" y1="271.3" x2="574.6" y2="271.3" stroke="#3a3a3a" stroke-width="0.8"/><line x1="248.3" y1="130" x2="248.3" y2="414" stroke="#3a3a3a" stroke-width="0.8"/><polygon points="248.50,126.90 244.30,134.70 252.70,134.70" fill="#2c2c2c"/><polygon points="248.20,417.10 244.00,409.30 252.40,409.30" fill="#2c2c2c"/><rect x="236.3" y="261.8" width="9.70" height="20.70" fill="#fbf6f5" /><text x="241.15" y="274.44" font-size="7.4" text-anchor="middle" fill="#3c3c3c" font-family="Liberation Serif, serif" transform="rotate(-90 241.15 272.15)">500cm</text><line x1="266.7" y1="105" x2="266.7" y2="140.5" stroke="#3a3a3a" stroke-width="0.7"/><line x1="278.5" y1="105" x2="278.5" y2="140.5" stroke="#3a3a3a" stroke-width="0.7"/><line x1="242" y1="115" x2="256" y2="115" stroke="#3a3a3a" stroke-width="0.8"/><polygon points="266.70,115.00 254.50,111.20 254.50,118.80" fill="#2c2c2c"/><line x1="289" y1="115" x2="303.4" y2="115" stroke="#3a3a3a" stroke-width="0.8"/><polygon points="278.50,115.00 290.70,111.20 290.70,118.80" fill="#2c2c2c"/><rect x="264" y="98" width="17.00" height="7.60" fill="#fbf6f5" /><text x="272.50" y="104.16" font-size="7.6" text-anchor="middle" fill="#3c3c3c" font-family="Liberation Serif, serif">20cm</text><rect x="266.7" y="140.6" width="11.80" height="117.00" fill="#f8f8f8" stroke="#8c8c8c" stroke-width="0.7" /><rect x="269.6" y="153.1" width="6.00" height="5.80" fill="#fdfdfd" stroke="#7d7d7d" stroke-width="1.0" rx="0.6"/><rect x="269.6" y="162.79999999999998" width="6.00" height="5.80" fill="#fdfdfd" stroke="#7d7d7d" stroke-width="1.0" rx="0.6"/><rect x="269.6" y="172.5" width="6.00" height="5.80" fill="#fdfdfd" stroke="#7d7d7d" stroke-width="1.0" rx="0.6"/><rect x="269.6" y="182.2" width="6.00" height="5.80" fill="#fdfdfd" stroke="#7d7d7d" stroke-width="1.0" rx="0.6"/><rect x="269.6" y="191.9" width="6.00" height="5.80" fill="#fdfdfd" stroke="#7d7d7d" stroke-width="1.0" rx="0.6"/><rect x="269.6" y="201.6" width="6.00" height="5.80" fill="#fdfdfd" stroke="#7d7d7d" stroke-width="1.0" rx="0.6"/><rect x="269.6" y="211.29999999999998" width="6.00" height="5.80" fill="#fdfdfd" stroke="#7d7d7d" stroke-width="1.0" rx="0.6"/><rect x="269.6" y="220.99999999999997" width="6.00" height="5.80" fill="#fdfdfd" stroke="#7d7d7d" stroke-width="1.0" rx="0.6"/><rect x="269.6" y="230.7" width="6.00" height="5.80" fill="#fdfdfd" stroke="#7d7d7d" stroke-width="1.0" rx="0.6"/><rect x="269.6" y="240.4" width="6.00" height="5.80" fill="#fdfdfd" stroke="#7d7d7d" stroke-width="1.0" rx="0.6"/><rect x="266.7" y="286.9" width="12.30" height="116.90" fill="#f8f8f8" stroke="#8c8c8c" stroke-width="0.7" /><rect x="269.6" y="298.1" width="6.00" height="5.80" fill="#fdfdfd" stroke="#7d7d7d" stroke-width="1.0" rx="0.6"/><rect x="269.6" y="307.8" width="6.00" height="5.80" fill="#fdfdfd" stroke="#7d7d7d" stroke-width="1.0" rx="0.6"/><rect x="269.6" y="317.5" width="6.00" height="5.80" fill="#fdfdfd" stroke="#7d7d7d" stroke-width="1.0" rx="0.6"/><rect x="269.6" y="327.20000000000005" width="6.00" height="5.80" fill="#fdfdfd" stroke="#7d7d7d" stroke-width="1.0" rx="0.6"/><rect x="269.6" y="336.90000000000003" width="6.00" height="5.80" fill="#fdfdfd" stroke="#7d7d7d" stroke-width="1.0" rx="0.6"/><rect x="269.6" y="346.6" width="6.00" height="5.80" fill="#fdfdfd" stroke="#7d7d7d" stroke-width="1.0" rx="0.6"/><rect x="269.6" y="356.3" width="6.00" height="5.80" fill="#fdfdfd" stroke="#7d7d7d" stroke-width="1.0" rx="0.6"/><rect x="269.6" y="366.0" width="6.00" height="5.80" fill="#fdfdfd" stroke="#7d7d7d" stroke-width="1.0" rx="0.6"/><rect x="269.6" y="375.70000000000005" width="6.00" height="5.80" fill="#fdfdfd" stroke="#7d7d7d" stroke-width="1.0" rx="0.6"/><rect x="269.6" y="385.40000000000003" width="6.00" height="5.80" fill="#fdfdfd" stroke="#7d7d7d" stroke-width="1.0" rx="0.6"/><line x1="278.5" y1="140.5" x2="297" y2="140.5" stroke="#3a3a3a" stroke-width="0.7"/><line x1="278.5" y1="257.6" x2="297" y2="257.6" stroke="#3a3a3a" stroke-width="0.7"/><line x1="288.6" y1="146" x2="288.6" y2="251" stroke="#3a3a3a" stroke-width="0.8"/><polygon points="288.60,140.70 284.90,148.70 292.30,148.70" fill="#2c2c2c"/><polygon points="288.60,257.40 284.90,249.40 292.30,249.40" fill="#2c2c2c"/><rect x="293" y="189" width="6.80" height="21.00" fill="#fbf6f5" /><text x="296.40" y="201.79" font-size="7.4" text-anchor="middle" fill="#3c3c3c" font-family="Liberation Serif, serif" transform="rotate(-90 296.40 199.50)">200cm</text><rect x="305" y="132.9" width="14.00" height="14.10" fill="url(#bg)" stroke="#8593a1" stroke-width="0.8" /><text x="312" y="139.3" font-size="2.8" text-anchor="middle" fill="#5d83b8" font-family="Liberation Sans">无序</text><text x="312" y="143.6" font-size="2.8" text-anchor="middle" fill="#5d83b8" font-family="Liberation Sans">缓存</text><rect x="304.8" y="397.5" width="14.30" height="14.30" fill="url(#pg)" stroke="#9a86a8" stroke-width="0.8" /><text x="312" y="404" font-size="2.8" text-anchor="middle" fill="#a07ab8" font-family="Liberation Sans">无序</text><text x="312" y="408.3" font-size="2.8" text-anchor="middle" fill="#a07ab8" font-family="Liberation Sans">缓存</text><rect x="348.7" y="126.7" width="28.60" height="58.10" fill="url(#og)" stroke="#9c7a66" stroke-width="0.6" /><rect x="348.1" y="358.8" width="29.30" height="58.50" fill="url(#og)" stroke="#9c7a66" stroke-width="0.6" /><polygon points="360.5,231 401.4,271.3 360.5,313 319.5,271.3" fill="url(#og)" stroke="#9c7a66" stroke-width="1"/><circle cx="438.7" cy="199.2" r="14.6" fill="url(#og)" stroke="#9c7a66" stroke-width="1"/><circle cx="435.5" cy="345" r="14.6" fill="url(#og)" stroke="#9c7a66" stroke-width="1"/><rect x="420.8" y="133.1" width="15.20" height="13.50" fill="url(#bg)" stroke="#9a9ca6" stroke-width="1.0" /><rect x="465.5" y="133.1" width="13.50" height="13.50" fill="url(#bg)" stroke="#9a9ca6" stroke-width="1.0" /><rect x="508.5" y="133.1" width="13.70" height="13.50" fill="url(#bg)" stroke="#9a9ca6" stroke-width="1.0" /><rect x="420.7" y="251.6" width="15.30" height="15.20" fill="url(#bg)" stroke="#9a9ca6" stroke-width="1.0" /><rect x="420.7" y="277.79999999999995" width="15.30" height="15.20" fill="url(#pg)" stroke="#a896aa" stroke-width="1.0" /><rect x="465.5" y="251.6" width="14.00" height="15.20" fill="url(#bg)" stroke="#9a9ca6" stroke-width="1.0" /><rect x="465.5" y="277.79999999999995" width="14.00" height="15.20" fill="url(#pg)" stroke="#a896aa" stroke-width="1.0" /><rect x="508.2" y="251.6" width="14.30" height="15.20" fill="url(#bg)" stroke="#9a9ca6" stroke-width="1.0" /><rect x="508.2" y="277.79999999999995" width="14.30" height="15.20" fill="url(#pg)" stroke="#a896aa" stroke-width="1.0" /><rect x="531.2" y="170.1" width="15.30" height="14.90" fill="url(#bg)" stroke="#9a9ca6" stroke-width="1.0" /><rect x="531.2" y="214.3" width="15.30" height="14.30" fill="url(#bg)" stroke="#9a9ca6" stroke-width="1.0" /><rect x="531.5" y="316.4" width="14.70" height="13.20" fill="url(#pg)" stroke="#a896aa" stroke-width="1.0" /><rect x="531.5" y="360.4" width="14.70" height="13.70" fill="url(#pg)" stroke="#a896aa" stroke-width="1.0" /><rect x="421.0" y="397.79999999999995" width="14.80" height="13.80" fill="url(#pg)" stroke="#a896aa" stroke-width="1.0" /><rect x="465.5" y="397.79999999999995" width="13.70" height="13.80" fill="url(#pg)" stroke="#a896aa" stroke-width="1.0" /><rect x="509.0" y="397.79999999999995" width="13.50" height="13.80" fill="url(#pg)" stroke="#a896aa" stroke-width="1.0" /><line x1="465" y1="119" x2="465" y2="132.7" stroke="#3a3a3a" stroke-width="0.7"/><line x1="479.5" y1="119" x2="479.5" y2="132.7" stroke="#3a3a3a" stroke-width="0.7"/><line x1="440.4" y1="138.6" x2="458" y2="138.6" stroke="#3a3a3a" stroke-width="0.8"/><polygon points="465.00,138.60 457.00,134.90 457.00,142.30" fill="#2c2c2c"/><line x1="486" y1="138.6" x2="503.5" y2="138.6" stroke="#3a3a3a" stroke-width="0.8"/><polygon points="479.50,138.60 487.50,134.90 487.50,142.30" fill="#2c2c2c"/><rect x="465" y="110.6" width="16.00" height="8.80" fill="#fbf6f5" /><text x="473.00" y="117.36" font-size="7.6" text-anchor="middle" fill="#3c3c3c" font-family="Liberation Serif, serif">25cm</text><line x1="476.5" y1="157" x2="476.5" y2="176" stroke="#3a3a3a" stroke-width="0.7"/><line x1="522.3" y1="157" x2="522.3" y2="176" stroke="#3a3a3a" stroke-width="0.7"/><line x1="482" y1="166.2" x2="517" y2="166.2" stroke="#3a3a3a" stroke-width="0.8"/><polygon points="476.70,166.20 484.70,162.50 484.70,169.90" fill="#2c2c2c"/><polygon points="522.10,166.20 514.10,162.50 514.10,169.90" fill="#2c2c2c"/><rect x="491" y="156" width="17.00" height="6.60" fill="#fbf6f5" /><text x="499.50" y="161.66" font-size="7.6" text-anchor="middle" fill="#3c3c3c" font-family="Liberation Serif, serif">80cm</text><rect x="476.2" y="175.7" width="46.10" height="46.50" fill="url(#bg)" stroke="#5a5f66" stroke-width="0.9" stroke-dasharray="3.2 2"/><rect x="476.2" y="322" width="46.10" height="46.60" fill="url(#pg)" stroke="#6a5a70" stroke-width="0.9" stroke-dasharray="3.2 2"/><text x="499.4" y="202.3" font-size="8" text-anchor="middle" fill="#3a3a3a" font-family="Liberation Serif, serif">出发区</text><line x1="436.5" y1="271.3" x2="436.5" y2="284" stroke="#3a3a3a" stroke-width="0.7"/><line x1="465" y1="271.3" x2="465" y2="284" stroke="#3a3a3a" stroke-width="0.7"/><line x1="449.7" y1="264" x2="449.7" y2="280.2" stroke="#3a3a3a" stroke-width="0.7"/><line x1="442" y1="280.2" x2="460" y2="280.2" stroke="#3a3a3a" stroke-width="0.8"/><polygon points="436.70,280.20 444.70,276.50 444.70,283.90" fill="#2c2c2c"/><polygon points="464.80,280.20 456.80,276.50 456.80,283.90" fill="#2c2c2c"/><rect x="442" y="255.9" width="16.80" height="8.50" fill="#fbf6f5" /><text x="450.40" y="262.51" font-size="7.6" text-anchor="middle" fill="#3c3c3c" font-family="Liberation Serif, serif">50cm</text><line x1="528" y1="283.5" x2="547" y2="283.5" stroke="#3a3a3a" stroke-width="0.8"/><polygon points="523.20,283.50 531.20,279.80 531.20,287.20" fill="#2c2c2c"/><polygon points="551.20,283.50 543.20,279.80 543.20,287.20" fill="#2c2c2c"/><line x1="537.6" y1="283.5" x2="537.6" y2="297" stroke="#3a3a3a" stroke-width="0.7"/><line x1="523" y1="293.4" x2="523" y2="322" stroke="#3a3a3a" stroke-width="0.7"/><rect x="529.4" y="296.8" width="17.30" height="7.90" fill="#fbf6f5" /><text x="538.05" y="303.11" font-size="7.6" text-anchor="middle" fill="#3c3c3c" font-family="Liberation Serif, serif">50cm</text><line x1="442" y1="345" x2="546" y2="345" stroke="#3a3a3a" stroke-width="0.8"/><polygon points="436.90,345.00 444.90,341.30 444.90,348.70" fill="#2c2c2c"/><polygon points="551.00,345.00 543.00,341.30 543.00,348.70" fill="#2c2c2c"/><text x="499.4" y="347.8" font-size="8" text-anchor="middle" fill="#3a3a3a" font-family="Liberation Serif, serif">出发区</text><line x1="492.7" y1="345" x2="492.7" y2="378.5" stroke="#3a3a3a" stroke-width="0.7"/><rect x="483.6" y="378.5" width="20.90" height="8.50" fill="#fbf6f5" /><text x="494.05" y="385.11" font-size="7.6" text-anchor="middle" fill="#3c3c3c" font-family="Liberation Serif, serif">200cm</text><line x1="567.6" y1="276" x2="567.6" y2="325" stroke="#3a3a3a" stroke-width="0.8"/><polygon points="567.60,271.50 563.90,279.50 571.30,279.50" fill="#2c2c2c"/><polygon points="567.60,329.80 563.90,321.80 571.30,321.80" fill="#2c2c2c"/><line x1="546.7" y1="330" x2="573.5" y2="330" stroke="#3a3a3a" stroke-width="0.7"/><rect x="568.8" y="291.7" width="7.50" height="19.70" fill="#fbf6f5" /><text x="572.55" y="303.78" font-size="7.2" text-anchor="middle" fill="#3c3c3c" font-family="Liberation Serif, serif" transform="rotate(-90 572.55 301.55)">100cm</text><line x1="561" y1="365" x2="561" y2="412" stroke="#3a3a3a" stroke-width="0.8"/><polygon points="561.00,360.20 557.30,368.20 564.70,368.20" fill="#2c2c2c"/><polygon points="561.00,417.10 557.30,409.10 564.70,409.10" fill="#2c2c2c"/><line x1="546.7" y1="360" x2="569.6" y2="360" stroke="#3a3a3a" stroke-width="0.7"/><rect x="565" y="376.5" width="7.40" height="21.70" fill="#fbf6f5" /><text x="568.70" y="389.58" font-size="7.2" text-anchor="middle" fill="#3c3c3c" font-family="Liberation Serif, serif" transform="rotate(-90 568.70 387.35)">100cm</text><line x1="319.2" y1="263.4" x2="319.2" y2="290" stroke="#3a3a3a" stroke-width="0.7"/><rect x="280" y="267" width="20.80" height="7.20" fill="#fbf6f5" /><text x="290.40" y="272.96" font-size="7.6" text-anchor="middle" fill="#3c3c3c" font-family="Liberation Serif, serif">100cm</text><line x1="266" y1="271.6" x2="314" y2="271.6" stroke="#3a3a3a" stroke-width="0.9"/><polygon points="261.20,271.60 269.20,267.90 269.20,275.30" fill="#2c2c2c"/><polygon points="319.30,271.60 311.30,267.90 311.30,275.30" fill="#2c2c2c"/><line x1="281" y1="271.6" x2="300" y2="271.6" stroke="#3a3a3a" stroke-width="0.8" opacity="0.55"/><line x1="318.6" y1="383.6" x2="318.6" y2="397.5" stroke="#3a3a3a" stroke-width="0.7"/><line x1="334.3" y1="378" x2="334.3" y2="391" stroke="#3a3a3a" stroke-width="0.7"/><line x1="324" y1="391" x2="343" y2="391" stroke="#3a3a3a" stroke-width="0.8"/><polygon points="318.80,391.00 331.10,387.30 331.10,394.70" fill="#2c2c2c"/><polygon points="348.00,391.00 336.40,387.30 336.40,394.70" fill="#2c2c2c"/><rect x="325" y="369" width="17.60" height="9.70" fill="#fbf6f5" /><text x="333.80" y="376.21" font-size="7.6" text-anchor="middle" fill="#3c3c3c" font-family="Liberation Serif, serif">50cm</text><line x1="260.6" y1="417.3" x2="260.6" y2="436" stroke="#3a3a3a" stroke-width="0.7"/><line x1="348" y1="417.3" x2="348" y2="439" stroke="#3a3a3a" stroke-width="0.7"/><line x1="377.4" y1="417.3" x2="377.4" y2="439" stroke="#3a3a3a" stroke-width="0.7"/><line x1="266" y1="425.8" x2="343" y2="425.8" stroke="#3a3a3a" stroke-width="0.8"/><polygon points="260.80,425.80 273.10,422.00 273.10,429.60" fill="#2c2c2c"/><polygon points="347.80,425.80 335.50,422.00 335.50,429.60" fill="#2c2c2c"/><rect x="292.3" y="427.2" width="21.30" height="8.30" fill="#fbf6f5" /><text x="302.95" y="433.71" font-size="7.6" text-anchor="middle" fill="#3c3c3c" font-family="Liberation Serif, serif">150cm</text><line x1="352" y1="426.5" x2="373" y2="426.5" stroke="#3a3a3a" stroke-width="0.8"/><polygon points="348.20,426.50 360.20,422.90 360.20,430.10" fill="#2c2c2c"/><polygon points="377.20,426.50 365.00,422.90 365.00,430.10" fill="#2c2c2c"/><line x1="362" y1="426.5" x2="362" y2="442.2" stroke="#3a3a3a" stroke-width="0.7"/><rect x="354" y="442.2" width="17.60" height="8.30" fill="#fbf6f5" /><text x="362.80" y="448.71" font-size="7.6" text-anchor="middle" fill="#3c3c3c" font-family="Liberation Serif, serif">50cm</text><circle cx="226.8" cy="91.2" r="3.4" fill="#ffffff" stroke="#a6a6a6" stroke-width="0.9"/><circle cx="407" cy="91.2" r="3.4" fill="#ffffff" stroke="#a6a6a6" stroke-width="0.9"/><circle cx="587.2" cy="91.2" r="3.4" fill="#ffffff" stroke="#a6a6a6" stroke-width="0.9"/><circle cx="226.5" cy="277.3" r="3.4" fill="#ffffff" stroke="#a6a6a6" stroke-width="0.9"/><circle cx="587.3" cy="277.3" r="3.4" fill="#ffffff" stroke="#a6a6a6" stroke-width="0.9"/><circle cx="226.6" cy="462.4" r="3.4" fill="#ffffff" stroke="#a6a6a6" stroke-width="0.9"/><circle cx="407" cy="462.4" r="3.4" fill="#ffffff" stroke="#a6a6a6" stroke-width="0.9"/><circle cx="587.2" cy="462.4" r="3.4" fill="#ffffff" stroke="#a6a6a6" stroke-width="0.9"/><path d="M252.4 177.6 L251.2 179.4 H253.6 Z M248.6 181.9 L250.4 180.7 V183.1 Z M256 181.9 L254.2 180.7 V183.1 Z" fill="#333"/><path d="M252.4 179 V186.4 M250 181.9 H254.6" stroke="#444" stroke-width="0.7" fill="none"/><path d="M252.7 183 L252.9 189.2 L254.3 187.8 L255.6 190.6 L256.6 190.1 L255.4 187.4 L257.2 187.2 Z" fill="#fafafa" stroke="#444" stroke-width="0.6" stroke-linejoin="round"/></svg><div style="left:865.8px;top:-10px;width:230px;height:530px;background:#ffffff;"></div><div style="left:866.6px;top:242.5px;width:2.2px;height:13.3px;background:#b6b9c9;border-radius:1px;"></div><div style="left:872.5px;top:2px;width:202.5px;height:17.2px;background:#f3f4f6;border-radius:3px;"></div><div style="left:873.3px;top:2.8px;width:98.5px;height:15.6px;background:#ffffff;border-radius:2.5px;box-shadow:0 0 1px rgba(0,0,0,0.12);"></div><div class="t" style="top:6.00px;height:9.6px;line-height:9.6px;font-size:6.6px;color:#2b2e33;white-space:nowrap;left:922.5px;transform:translateX(-50%);-webkit-text-stroke:0.2px #2b2e33;">会议中(92)</div><div class="t" style="top:5.90px;height:9.8px;line-height:9.8px;font-size:6.8px;color:#4a4e55;white-space:nowrap;left:1024.5px;transform:translateX(-50%);">未入会</div><div style="left:1064px;top:9.5px;width:24px;height:16.5px;background:#595959;border-radius:8.3px;"></div><svg style="left:1069.2px;top:15px;" width="3.4" height="5.6" viewBox="0 0 3.4 5.6"><path d="M2.8 0.5 L0.7 2.8 L2.8 5.1" fill="none" stroke="#f0f0f0" stroke-width="0.85"/></svg><svg style="left:872.7px;top:28.70px;" width="17" height="17" viewBox="0 0 17 17"><defs><clipPath id="ac1"><circle cx="8.5" cy="8.5" r="8.4"/></clipPath><filter id="af1" x="-10%" y="-10%" width="120%" height="120%"><feGaussianBlur stdDeviation="0.45"/></filter></defs><g clip-path="url(#ac1)"><rect width="17" height="17" fill="#fdf8f6"/><g filter="url(#af1)"><ellipse cx="8.4" cy="9" rx="7.6" ry="6.2" fill="#a4562b"/><ellipse cx="8.3" cy="3.6" rx="7" ry="3.7" fill="#c5232d"/><path d="M3.6 6 Q8.4 3.4 13.4 6 L13.2 8 Q8.4 5.6 3.8 8 Z" fill="#a4562b"/><ellipse cx="8.6" cy="10.8" rx="4.9" ry="4.7" fill="#fcefee"/><ellipse cx="5.6" cy="11.6" rx="1.1" ry="0.8" fill="#f3a9b2"/><ellipse cx="11.4" cy="11.6" rx="1.1" ry="0.8" fill="#f3a9b2"/><rect x="3.2" y="14.6" width="11" height="3" fill="#fdf7f6"/><circle cx="5" cy="15.3" r="0.9" fill="#e0353a"/><circle cx="12" cy="15" r="1" fill="#e0353a"/></g></g></svg><div class="t" style="top:27.68px;height:9.25px;line-height:9.25px;font-size:6.25px;color:#2e3238;white-space:nowrap;left:894.8px;-webkit-text-stroke:0.2px #2e3238;">时汇信息唐小姐</div><div class="t" style="top:37.25px;height:9.1px;line-height:9.1px;font-size:6.1px;color:#5e6268;white-space:nowrap;left:894.8px;">(主持人, 我)</div><div style="left:1027.6px;top:32.6px;width:8.8px;height:8.8px;background:#fddcdc;border-radius:50%;"></div><div style="left:1029.7px;top:34.7px;width:4.6px;height:4.6px;background:#f52d2b;border-radius:50%;"></div><svg style="left:1042.0px;top:32.6px;" width="7.2" height="9.2" viewBox="0 0 7.2 9.2"><rect x="2.3" y="0.5" width="2.6" height="5" rx="1.3" fill="#9698a2"/><path d="M1 4 Q1 7 3.6 7 Q6.2 7 6.2 4 M3.6 7 V8.7 M2.2 8.8 H5" fill="none" stroke="#a0a2ac" stroke-width="0.75"/><path d="M0.3 8.4 L6.9 1" stroke="#f27d7d" stroke-width="0.85"/></svg><svg style="left:1054.7px;top:33.800000000000004px;" width="9.6" height="6.8" viewBox="0 0 9.6 6.8"><rect x="0.3" y="0.9" width="6.2" height="5" rx="0.8" fill="#8a8c96"/><path d="M6.6 3.4 L9.3 1.2 V5.6 Z" fill="#8a8c96"/><path d="M0.3 6.8 L7 -0.2" stroke="#f58a8e" stroke-width="0.9"/></svg><svg style="left:872.7px;top:53.93px;" width="17" height="17" viewBox="0 0 17 17"><defs><clipPath id="ac2"><circle cx="8.5" cy="8.5" r="8.4"/></clipPath><filter id="af2" x="-10%" y="-10%" width="120%" height="120%"><feGaussianBlur stdDeviation="0.45"/></filter></defs><g clip-path="url(#ac2)"><rect width="17" height="17" fill="#f3e3a4"/><g filter="url(#af2)"><rect width="17" height="9" fill="#f6e7a6"/><path d="M0 11 L17 6.5 V17 H0 Z" fill="#e4c796"/><path d="M1.8 11 L3.2 6.6 L4.6 11 Z M5.4 10 L6.8 5.6 L8.2 10 Z M8.8 9 L10.2 4.8 L11.6 9 Z M12.4 8.2 L13.6 4.6 L14.9 8.2 Z" fill="#3d3322"/><path d="M0 13.5 L17 10 V17 H0 Z" fill="#e8d0a4" opacity="0.9"/><circle cx="3.4" cy="13.6" r="1.4" fill="#f4e48a"/></g></g></svg><div class="t" style="top:52.91px;height:9.25px;line-height:9.25px;font-size:6.25px;color:#2e3238;white-space:nowrap;left:903.5px;-webkit-text-stroke:0.2px #2e3238;">易</div><div class="t" style="top:62.48px;height:9.1px;line-height:9.1px;font-size:6.1px;color:#5e6268;white-space:nowrap;left:894.8px;">(联席主持人)</div><div style="left:1028px;top:59.03000000000001px;width:8px;height:5.4px;background:#8a8c96;border-radius:1px;"></div><svg style="left:1030.8px;top:60.330000000000005px;" width="3" height="3" viewBox="0 0 3 3"><path d="M0.3 0.2 L2.7 1.5 L0.3 2.8 Z" fill="#e4e5ea"/></svg><div style="left:1029.8px;top:65.03px;width:4.4px;height:0.8px;background:#9a9ca6;"></div><svg style="left:1041.9px;top:57.830000000000005px;" width="7.2" height="9.2" viewBox="0 0 7.2 9.2"><rect x="2.2" y="0.3" width="2.8" height="5.4" rx="1.4" fill="#33c23a"/><path d="M1 4 Q1 7 3.6 7 Q6.2 7 6.2 4 M3.6 7 V8.7 M2.2 8.8 H5" fill="none" stroke="#9a9a9a" stroke-width="0.7"/></svg><svg style="left:1054.8px;top:59.03000000000001px;" width="9.6" height="6.8" viewBox="0 0 9.6 6.8"><rect x="0.3" y="0.9" width="6.2" height="5" rx="0.8" fill="#8a8c96"/><path d="M6.6 3.4 L9.3 1.2 V5.6 Z" fill="#8a8c96"/><path d="M0.3 6.8 L7 -0.2" stroke="#f58a8e" stroke-width="0.9"/></svg><svg style="left:872.7px;top:79.16px;" width="17" height="17" viewBox="0 0 17 17"><defs><clipPath id="ac3"><circle cx="8.5" cy="8.5" r="8.4"/></clipPath><filter id="af3" x="-10%" y="-10%" width="120%" height="120%"><feGaussianBlur stdDeviation="0.45"/></filter></defs><g clip-path="url(#ac3)"><rect width="17" height="17" fill="#3a3a3a"/><g filter="url(#af3)"><circle cx="8.5" cy="8.5" r="8.4" fill="#303030"/><circle cx="8.5" cy="8.5" r="6" fill="#222"/><path d="M6 16 L6.4 8.2 Q8.2 6.2 10 8.2 L10.8 16 Z" fill="#0c0c0c"/><ellipse cx="8.2" cy="5.6" rx="1.2" ry="1.6" fill="#b9a79b"/><path d="M8 7.4 L8.6 11 L8.2 7.4 Z" stroke="#cfcfcf" stroke-width="0.5"/></g></g></svg><div class="t" style="top:78.13px;height:9.25px;line-height:9.25px;font-size:6.25px;color:#2e3238;white-space:nowrap;left:894.8px;-webkit-text-stroke:0.2px #2e3238;">时汇信息李玉琴</div><div class="t" style="top:87.71px;height:9.1px;line-height:9.1px;font-size:6.1px;color:#5e6268;white-space:nowrap;left:894.8px;">(联席主持人)</div><svg style="left:1042.0px;top:83.06px;" width="7.2" height="9.2" viewBox="0 0 7.2 9.2"><rect x="2.3" y="0.5" width="2.6" height="5" rx="1.3" fill="#9698a2"/><path d="M1 4 Q1 7 3.6 7 Q6.2 7 6.2 4 M3.6 7 V8.7 M2.2 8.8 H5" fill="none" stroke="#a0a2ac" stroke-width="0.75"/><path d="M0.3 8.4 L6.9 1" stroke="#f27d7d" stroke-width="0.85"/></svg><svg style="left:1054.7px;top:84.25999999999999px;" width="9.6" height="6.8" viewBox="0 0 9.6 6.8"><rect x="0.3" y="0.9" width="6.2" height="5" rx="0.8" fill="#8a8c96"/><path d="M6.6 3.4 L9.3 1.2 V5.6 Z" fill="#8a8c96"/><path d="M0.3 6.8 L7 -0.2" stroke="#f58a8e" stroke-width="0.9"/></svg><svg style="left:872.7px;top:104.39px;" width="17" height="17" viewBox="0 0 17 17"><defs><clipPath id="ac4"><circle cx="8.5" cy="8.5" r="8.4"/></clipPath><filter id="af4" x="-10%" y="-10%" width="120%" height="120%"><feGaussianBlur stdDeviation="0.45"/></filter></defs><g clip-path="url(#ac4)"><rect width="17" height="17" fill="#ecd5e8"/><g filter="url(#af4)"><rect width="17" height="17" fill="#ecd5e8"/><path d="M-1 9 Q0 -1 9 0.4 Q12 1.4 11.4 4.6 Q6 4 2.4 9.6 Z" fill="#e6223b"/><ellipse cx="9.4" cy="8.4" rx="3.8" ry="3.6" fill="#f8dfe0"/><path d="M0 9.6 Q4 8 6.4 12 Q8 15 5 17 H0 Z" fill="#cf3d86"/><path d="M7 12.6 Q10 10.6 13.4 12.4 L12 17 H7 Z" fill="#b63a6a"/><path d="M12.6 6 L15.8 9.6 L14.2 12.4 Z" fill="#5a3a55"/></g></g></svg><div class="t" style="top:107.94px;height:9.9px;line-height:9.9px;font-size:6.9px;color:#2e3238;white-space:nowrap;left:894.8px;">.</div><svg style="left:1042.0px;top:108.29px;" width="7.2" height="9.2" viewBox="0 0 7.2 9.2"><rect x="2.3" y="0.5" width="2.6" height="5" rx="1.3" fill="#9698a2"/><path d="M1 4 Q1 7 3.6 7 Q6.2 7 6.2 4 M3.6 7 V8.7 M2.2 8.8 H5" fill="none" stroke="#a0a2ac" stroke-width="0.75"/><path d="M0.3 8.4 L6.9 1" stroke="#f27d7d" stroke-width="0.85"/></svg><svg style="left:1054.7px;top:109.49px;" width="9.6" height="6.8" viewBox="0 0 9.6 6.8"><rect x="0.3" y="0.9" width="6.2" height="5" rx="0.8" fill="#8a8c96"/><path d="M6.6 3.4 L9.3 1.2 V5.6 Z" fill="#8a8c96"/><path d="M0.3 6.8 L7 -0.2" stroke="#f58a8e" stroke-width="0.9"/></svg><div style="left:872.7px;top:129.62px;width:17px;height:17px;background:#3d6fc6;border-radius:50%;"></div><div class="t" style="top:133.42px;height:9.4px;line-height:9.4px;font-size:6.4px;color:#ffffff;white-space:nowrap;left:881.2px;transform:translateX(-50%);">20</div><div class="t" style="top:133.52px;height:9.2px;line-height:9.2px;font-size:6.2px;color:#2e3238;white-space:nowrap;left:894.8px;">897620</div><svg style="left:1042.0px;top:133.52px;" width="7.2" height="9.2" viewBox="0 0 7.2 9.2"><rect x="2.3" y="0.5" width="2.6" height="5" rx="1.3" fill="#9698a2"/><path d="M1 4 Q1 7 3.6 7 Q6.2 7 6.2 4 M3.6 7 V8.7 M2.2 8.8 H5" fill="none" stroke="#a0a2ac" stroke-width="0.75"/><path d="M0.3 8.4 L6.9 1" stroke="#f27d7d" stroke-width="0.85"/></svg><svg style="left:1054.7px;top:134.72px;" width="9.6" height="6.8" viewBox="0 0 9.6 6.8"><rect x="0.3" y="0.9" width="6.2" height="5" rx="0.8" fill="#8a8c96"/><path d="M6.6 3.4 L9.3 1.2 V5.6 Z" fill="#8a8c96"/><path d="M0.3 6.8 L7 -0.2" stroke="#f58a8e" stroke-width="0.9"/></svg><svg style="left:872.7px;top:154.85px;" width="17" height="17" viewBox="0 0 17 17"><defs><clipPath id="ac6"><circle cx="8.5" cy="8.5" r="8.4"/></clipPath><filter id="af6" x="-10%" y="-10%" width="120%" height="120%"><feGaussianBlur stdDeviation="0.45"/></filter></defs><g clip-path="url(#ac6)"><rect width="17" height="17" fill="#fffefb"/><g filter="url(#af6)"><path d="M2.3 14.2 Q1.6 1.6 8.6 1.6 Q15.6 1.6 14.9 14.2 Q8.6 15.2 2.3 14.2 Z" fill="#f5e49e"/><ellipse cx="8.4" cy="2.2" rx="1.8" ry="0.9" fill="#8a7a3a"/><rect x="2.8" y="7" width="2.8" height="2.6" fill="#c0392b"/><rect x="8.4" y="7" width="2.2" height="2.6" fill="#cf3a22"/><rect x="5.6" y="6" width="2.4" height="3" fill="#e8d8b0"/><rect x="5" y="15.6" width="6" height="1" fill="#b9b9b9"/></g></g></svg><div class="t" style="top:158.40px;height:9.9px;line-height:9.9px;font-size:6.9px;color:#2e3238;white-space:nowrap;left:894.8px;">black</div><svg style="left:1042.0px;top:158.75000000000003px;" width="7.2" height="9.2" viewBox="0 0 7.2 9.2"><rect x="2.3" y="0.5" width="2.6" height="5" rx="1.3" fill="#9698a2"/><path d="M1 4 Q1 7 3.6 7 Q6.2 7 6.2 4 M3.6 7 V8.7 M2.2 8.8 H5" fill="none" stroke="#a0a2ac" stroke-width="0.75"/><path d="M0.3 8.4 L6.9 1" stroke="#f27d7d" stroke-width="0.85"/></svg><svg style="left:1054.7px;top:159.95000000000002px;" width="9.6" height="6.8" viewBox="0 0 9.6 6.8"><rect x="0.3" y="0.9" width="6.2" height="5" rx="0.8" fill="#8a8c96"/><path d="M6.6 3.4 L9.3 1.2 V5.6 Z" fill="#8a8c96"/><path d="M0.3 6.8 L7 -0.2" stroke="#f58a8e" stroke-width="0.9"/></svg><div style="left:872.7px;top:180.07999999999998px;width:17px;height:17px;background:#3d6fc6;border-radius:50%;"></div><div class="t" style="top:183.88px;height:9.4px;line-height:9.4px;font-size:6.4px;color:#ffffff;white-space:nowrap;left:881.2px;transform:translateX(-50%);">C</div><div class="t" style="top:183.63px;height:9.9px;line-height:9.9px;font-size:6.9px;color:#2e3238;white-space:nowrap;left:894.8px;">curious</div><svg style="left:1042.0px;top:183.98px;" width="7.2" height="9.2" viewBox="0 0 7.2 9.2"><rect x="2.3" y="0.5" width="2.6" height="5" rx="1.3" fill="#9698a2"/><path d="M1 4 Q1 7 3.6 7 Q6.2 7 6.2 4 M3.6 7 V8.7 M2.2 8.8 H5" fill="none" stroke="#a0a2ac" stroke-width="0.75"/><path d="M0.3 8.4 L6.9 1" stroke="#f27d7d" stroke-width="0.85"/></svg><svg style="left:1054.7px;top:185.17999999999998px;" width="9.6" height="6.8" viewBox="0 0 9.6 6.8"><rect x="0.3" y="0.9" width="6.2" height="5" rx="0.8" fill="#8a8c96"/><path d="M6.6 3.4 L9.3 1.2 V5.6 Z" fill="#8a8c96"/><path d="M0.3 6.8 L7 -0.2" stroke="#f58a8e" stroke-width="0.9"/></svg><div style="left:872.7px;top:205.31px;width:17px;height:17px;background:#3d6fc6;border-radius:50%;"></div><div class="t" style="top:209.11px;height:9.4px;line-height:9.4px;font-size:6.4px;color:#ffffff;white-space:nowrap;left:881.2px;transform:translateX(-50%);">E</div><div class="t" style="top:208.86px;height:9.9px;line-height:9.9px;font-size:6.9px;color:#2e3238;white-space:nowrap;left:894.8px;">eyeieo.</div><svg style="left:1042.0px;top:209.21px;" width="7.2" height="9.2" viewBox="0 0 7.2 9.2"><rect x="2.3" y="0.5" width="2.6" height="5" rx="1.3" fill="#9698a2"/><path d="M1 4 Q1 7 3.6 7 Q6.2 7 6.2 4 M3.6 7 V8.7 M2.2 8.8 H5" fill="none" stroke="#a0a2ac" stroke-width="0.75"/><path d="M0.3 8.4 L6.9 1" stroke="#f27d7d" stroke-width="0.85"/></svg><svg style="left:1054.7px;top:210.41px;" width="9.6" height="6.8" viewBox="0 0 9.6 6.8"><rect x="0.3" y="0.9" width="6.2" height="5" rx="0.8" fill="#8a8c96"/><path d="M6.6 3.4 L9.3 1.2 V5.6 Z" fill="#8a8c96"/><path d="M0.3 6.8 L7 -0.2" stroke="#f58a8e" stroke-width="0.9"/></svg><div style="left:872.7px;top:230.54000000000002px;width:17px;height:17px;background:#3d6fc6;border-radius:50%;"></div><div class="t" style="top:234.34px;height:9.4px;line-height:9.4px;font-size:6.4px;color:#ffffff;white-space:nowrap;left:881.2px;transform:translateX(-50%);">H</div><div class="t" style="top:234.09px;height:9.9px;line-height:9.9px;font-size:6.9px;color:#2e3238;white-space:nowrap;left:894.8px;">HAO</div><svg style="left:1042.0px;top:234.44000000000003px;" width="7.2" height="9.2" viewBox="0 0 7.2 9.2"><rect x="2.3" y="0.5" width="2.6" height="5" rx="1.3" fill="#9698a2"/><path d="M1 4 Q1 7 3.6 7 Q6.2 7 6.2 4 M3.6 7 V8.7 M2.2 8.8 H5" fill="none" stroke="#a0a2ac" stroke-width="0.75"/><path d="M0.3 8.4 L6.9 1" stroke="#f27d7d" stroke-width="0.85"/></svg><svg style="left:1054.7px;top:235.64000000000001px;" width="9.6" height="6.8" viewBox="0 0 9.6 6.8"><rect x="0.3" y="0.9" width="6.2" height="5" rx="0.8" fill="#8a8c96"/><path d="M6.6 3.4 L9.3 1.2 V5.6 Z" fill="#8a8c96"/><path d="M0.3 6.8 L7 -0.2" stroke="#f58a8e" stroke-width="0.9"/></svg><svg style="left:872.7px;top:255.77px;" width="17" height="17" viewBox="0 0 17 17"><defs><clipPath id="ac10"><circle cx="8.5" cy="8.5" r="8.4"/></clipPath><filter id="af10" x="-10%" y="-10%" width="120%" height="120%"><feGaussianBlur stdDeviation="0.45"/></filter></defs><g clip-path="url(#ac10)"><rect width="17" height="17" fill="#1f1a13"/><g filter="url(#af10)"><rect width="17" height="17" fill="#1f1a13"/><path d="M9 0 H17 V7 Q13 5 10.4 7 Z" fill="#c9c5b2"/><ellipse cx="13" cy="8.6" rx="3" ry="3.6" fill="#b48a4c"/><path d="M5 4 Q7.4 2.6 8.4 5 L9 12 L5.4 13 Z" fill="#8c867a"/><path d="M2 14 Q8 11 15 13.6 V17 H2 Z" fill="#9a661c"/><path d="M8.6 6 L11.4 9 L10.6 14 L8.4 13 Z" fill="#2a2620"/></g></g></svg><div class="t" style="top:259.32px;height:9.9px;line-height:9.9px;font-size:6.9px;color:#2e3238;white-space:nowrap;left:894.8px;">L</div><svg style="left:1042.0px;top:259.66999999999996px;" width="7.2" height="9.2" viewBox="0 0 7.2 9.2"><rect x="2.3" y="0.5" width="2.6" height="5" rx="1.3" fill="#9698a2"/><path d="M1 4 Q1 7 3.6 7 Q6.2 7 6.2 4 M3.6 7 V8.7 M2.2 8.8 H5" fill="none" stroke="#a0a2ac" stroke-width="0.75"/><path d="M0.3 8.4 L6.9 1" stroke="#f27d7d" stroke-width="0.85"/></svg><svg style="left:1054.7px;top:260.87px;" width="9.6" height="6.8" viewBox="0 0 9.6 6.8"><rect x="0.3" y="0.9" width="6.2" height="5" rx="0.8" fill="#8a8c96"/><path d="M6.6 3.4 L9.3 1.2 V5.6 Z" fill="#8a8c96"/><path d="M0.3 6.8 L7 -0.2" stroke="#f58a8e" stroke-width="0.9"/></svg><div style="left:872.7px;top:281.0px;width:17px;height:17px;background:#3d6fc6;border-radius:50%;"></div><div class="t" style="top:284.80px;height:9.4px;line-height:9.4px;font-size:6.4px;color:#ffffff;white-space:nowrap;left:881.2px;transform:translateX(-50%);">L</div><div class="t" style="top:284.55px;height:9.9px;line-height:9.9px;font-size:6.9px;color:#2e3238;white-space:nowrap;left:894.8px;">Li-Yi. ! !</div><div style="left:919px;top:286.1px;width:6.6px;height:6.6px;background:#fdf3f2;border:0.8px solid #555;"></div><svg style="left:920.2px;top:287.3px;" width="4.2" height="4.2" viewBox="0 0 4.2 4.2"><path d="M0.3 3.9 L3.9 0.3" stroke="#e0453a" stroke-width="0.9"/></svg><svg style="left:1042.0px;top:284.9px;" width="7.2" height="9.2" viewBox="0 0 7.2 9.2"><rect x="2.3" y="0.5" width="2.6" height="5" rx="1.3" fill="#9698a2"/><path d="M1 4 Q1 7 3.6 7 Q6.2 7 6.2 4 M3.6 7 V8.7 M2.2 8.8 H5" fill="none" stroke="#a0a2ac" stroke-width="0.75"/><path d="M0.3 8.4 L6.9 1" stroke="#f27d7d" stroke-width="0.85"/></svg><svg style="left:1054.7px;top:286.1px;" width="9.6" height="6.8" viewBox="0 0 9.6 6.8"><rect x="0.3" y="0.9" width="6.2" height="5" rx="0.8" fill="#8a8c96"/><path d="M6.6 3.4 L9.3 1.2 V5.6 Z" fill="#8a8c96"/><path d="M0.3 6.8 L7 -0.2" stroke="#f58a8e" stroke-width="0.9"/></svg><svg style="left:872.7px;top:306.23px;" width="17" height="17" viewBox="0 0 17 17"><defs><clipPath id="ac12"><circle cx="8.5" cy="8.5" r="8.4"/></clipPath><filter id="af12" x="-10%" y="-10%" width="120%" height="120%"><feGaussianBlur stdDeviation="0.45"/></filter></defs><g clip-path="url(#ac12)"><rect width="17" height="17" fill="#c8bcb0"/><g filter="url(#af12)"><path d="M7.4 3 Q9.6 2 10 5 L10.6 9.6 L7.6 8 Z" fill="#191716"/><ellipse cx="8.3" cy="5" rx="1.1" ry="1.5" fill="#efe2d8"/><path d="M6.2 16.6 L6.8 9 Q8 7.4 9.2 8.4 L11.4 16.6 Z" fill="#0e0e10"/><path d="M7 8.6 Q7.8 12 7.2 15.4 L8.2 10 Z" fill="#f3eeea"/></g></g></svg><div class="t" style="top:309.78px;height:9.9px;line-height:9.9px;font-size:6.9px;color:#2e3238;white-space:nowrap;left:894.8px;">Tony</div><svg style="left:1042.0px;top:310.13px;" width="7.2" height="9.2" viewBox="0 0 7.2 9.2"><rect x="2.3" y="0.5" width="2.6" height="5" rx="1.3" fill="#9698a2"/><path d="M1 4 Q1 7 3.6 7 Q6.2 7 6.2 4 M3.6 7 V8.7 M2.2 8.8 H5" fill="none" stroke="#a0a2ac" stroke-width="0.75"/><path d="M0.3 8.4 L6.9 1" stroke="#f27d7d" stroke-width="0.85"/></svg><svg style="left:1054.7px;top:311.33000000000004px;" width="9.6" height="6.8" viewBox="0 0 9.6 6.8"><rect x="0.3" y="0.9" width="6.2" height="5" rx="0.8" fill="#8a8c96"/><path d="M6.6 3.4 L9.3 1.2 V5.6 Z" fill="#8a8c96"/><path d="M0.3 6.8 L7 -0.2" stroke="#f58a8e" stroke-width="0.9"/></svg><svg style="left:872.7px;top:331.46px;" width="17" height="17" viewBox="0 0 17 17"><defs><clipPath id="ac13"><circle cx="8.5" cy="8.5" r="8.4"/></clipPath><filter id="af13" x="-10%" y="-10%" width="120%" height="120%"><feGaussianBlur stdDeviation="0.45"/></filter></defs><g clip-path="url(#ac13)"><rect width="17" height="17" fill="#4c8fd8"/><g filter="url(#af13)"><rect width="17" height="9" fill="#4c8fd8"/><rect y="8.4" width="17" height="4" fill="#e2683a"/><rect x="9" y="7.4" width="8" height="1.6" fill="#f0a060"/><rect y="12" width="17" height="5" fill="#2d4470"/><ellipse cx="5.8" cy="5.8" rx="3.3" ry="3" fill="#1e2233"/><ellipse cx="6.2" cy="7" rx="1.9" ry="1.8" fill="#e8c8b4"/><path d="M3 17 L3.6 10 Q6 8.6 8.6 10 L9.6 17 Z" fill="#26396a"/><path d="M5.6 10 L6.4 13 L7 10 Z" fill="#e9e9f0"/></g></g></svg><div class="t" style="top:335.36px;height:9.2px;line-height:9.2px;font-size:6.2px;color:#2e3238;white-space:nowrap;left:894.8px;-webkit-text-stroke:0.15px #2e3238;">メ霸气ヴ爷ャ</div><svg style="left:1042.0px;top:335.35999999999996px;" width="7.2" height="9.2" viewBox="0 0 7.2 9.2"><rect x="2.3" y="0.5" width="2.6" height="5" rx="1.3" fill="#9698a2"/><path d="M1 4 Q1 7 3.6 7 Q6.2 7 6.2 4 M3.6 7 V8.7 M2.2 8.8 H5" fill="none" stroke="#a0a2ac" stroke-width="0.75"/><path d="M0.3 8.4 L6.9 1" stroke="#f27d7d" stroke-width="0.85"/></svg><svg style="left:1054.7px;top:336.56px;" width="9.6" height="6.8" viewBox="0 0 9.6 6.8"><rect x="0.3" y="0.9" width="6.2" height="5" rx="0.8" fill="#8a8c96"/><path d="M6.6 3.4 L9.3 1.2 V5.6 Z" fill="#8a8c96"/><path d="M0.3 6.8 L7 -0.2" stroke="#f58a8e" stroke-width="0.9"/></svg><svg style="left:872.7px;top:356.69px;" width="17" height="17" viewBox="0 0 17 17"><defs><clipPath id="ac14"><circle cx="8.5" cy="8.5" r="8.4"/></clipPath><filter id="af14" x="-10%" y="-10%" width="120%" height="120%"><feGaussianBlur stdDeviation="0.45"/></filter></defs><g clip-path="url(#ac14)"><rect width="17" height="17" fill="#14274c"/><g filter="url(#af14)"><rect width="17" height="17" fill="#14274c"/><circle cx="7.8" cy="7" r="5.2" fill="#0a1528"/><circle cx="7.8" cy="7" r="5.2" fill="none" stroke="#2d4f86" stroke-width="0.8"/><path d="M0 13 Q6 11.4 11 14 Q14 15 17 12.6 V17 H0 Z" fill="#9ccbe4"/><path d="M12 12.4 L16.4 11.6 L14.6 16 Z" fill="#e8413a"/><rect x="0" y="15.4" width="17" height="2" fill="#eef4f8"/></g></g></svg><div class="t" style="top:360.59px;height:9.2px;line-height:9.2px;font-size:6.2px;color:#2e3238;white-space:nowrap;left:894.8px;-webkit-text-stroke:0.15px #2e3238;">陈宇</div><svg style="left:1042.0px;top:360.59px;" width="7.2" height="9.2" viewBox="0 0 7.2 9.2"><rect x="2.3" y="0.5" width="2.6" height="5" rx="1.3" fill="#9698a2"/><path d="M1 4 Q1 7 3.6 7 Q6.2 7 6.2 4 M3.6 7 V8.7 M2.2 8.8 H5" fill="none" stroke="#a0a2ac" stroke-width="0.75"/><path d="M0.3 8.4 L6.9 1" stroke="#f27d7d" stroke-width="0.85"/></svg><svg style="left:1054.7px;top:361.79px;" width="9.6" height="6.8" viewBox="0 0 9.6 6.8"><rect x="0.3" y="0.9" width="6.2" height="5" rx="0.8" fill="#8a8c96"/><path d="M6.6 3.4 L9.3 1.2 V5.6 Z" fill="#8a8c96"/><path d="M0.3 6.8 L7 -0.2" stroke="#f58a8e" stroke-width="0.9"/></svg><div style="left:872.7px;top:381.92px;width:17px;height:17px;background:#3d6fc6;border-radius:50%;"></div><div class="t" style="top:385.62px;height:9.6px;line-height:9.6px;font-size:6.6px;color:#ffffff;white-space:nowrap;left:881.2px;transform:translateX(-50%);">智鹏</div><div class="t" style="top:385.82px;height:9.2px;line-height:9.2px;font-size:6.2px;color:#2e3238;white-space:nowrap;left:894.8px;-webkit-text-stroke:0.15px #2e3238;">陈智鹏</div><svg style="left:1042.0px;top:385.82px;" width="7.2" height="9.2" viewBox="0 0 7.2 9.2"><rect x="2.3" y="0.5" width="2.6" height="5" rx="1.3" fill="#9698a2"/><path d="M1 4 Q1 7 3.6 7 Q6.2 7 6.2 4 M3.6 7 V8.7 M2.2 8.8 H5" fill="none" stroke="#a0a2ac" stroke-width="0.75"/><path d="M0.3 8.4 L6.9 1" stroke="#f27d7d" stroke-width="0.85"/></svg><svg style="left:1054.7px;top:387.02000000000004px;" width="9.6" height="6.8" viewBox="0 0 9.6 6.8"><rect x="0.3" y="0.9" width="6.2" height="5" rx="0.8" fill="#8a8c96"/><path d="M6.6 3.4 L9.3 1.2 V5.6 Z" fill="#8a8c96"/><path d="M0.3 6.8 L7 -0.2" stroke="#f58a8e" stroke-width="0.9"/></svg><svg style="left:872.7px;top:407.15px;" width="17" height="17" viewBox="0 0 17 17"><defs><clipPath id="ac16"><circle cx="8.5" cy="8.5" r="8.4"/></clipPath><filter id="af16" x="-10%" y="-10%" width="120%" height="120%"><feGaussianBlur stdDeviation="0.45"/></filter></defs><g clip-path="url(#ac16)"><rect width="17" height="17" fill="#cbdbf0"/><g filter="url(#af16)"><rect width="17" height="10" fill="#cbdbf0"/><rect y="9.6" width="17" height="8" fill="#1f9819"/><rect y="9" width="17" height="1" fill="#cfdcc0"/><path d="M3 16 Q3 9 5.4 6 L6.6 16 Z" fill="#bcd4ee"/><ellipse cx="4.6" cy="7.4" rx="1.3" ry="1.7" fill="#6f93df"/><ellipse cx="7.8" cy="5.4" rx="2.1" ry="2.3" fill="#3a3028"/><ellipse cx="8" cy="6.6" rx="1.3" ry="1.5" fill="#ecd2c0"/><path d="M5.2 17 L6.4 8.8 Q8 7.8 9.6 8.8 L10.4 17 Z" fill="#f3e6dc"/><ellipse cx="10.2" cy="7" rx="0.9" ry="1.3" fill="#6f93df"/></g></g></svg><div class="t" style="top:411.05px;height:9.2px;line-height:9.2px;font-size:6.2px;color:#2e3238;white-space:nowrap;left:894.8px;-webkit-text-stroke:0.15px #2e3238;">大君同学</div><svg style="left:1042.0px;top:411.04999999999995px;" width="7.2" height="9.2" viewBox="0 0 7.2 9.2"><rect x="2.3" y="0.5" width="2.6" height="5" rx="1.3" fill="#9698a2"/><path d="M1 4 Q1 7 3.6 7 Q6.2 7 6.2 4 M3.6 7 V8.7 M2.2 8.8 H5" fill="none" stroke="#a0a2ac" stroke-width="0.75"/><path d="M0.3 8.4 L6.9 1" stroke="#f27d7d" stroke-width="0.85"/></svg><svg style="left:1054.7px;top:412.25px;" width="9.6" height="6.8" viewBox="0 0 9.6 6.8"><rect x="0.3" y="0.9" width="6.2" height="5" rx="0.8" fill="#8a8c96"/><path d="M6.6 3.4 L9.3 1.2 V5.6 Z" fill="#8a8c96"/><path d="M0.3 6.8 L7 -0.2" stroke="#f58a8e" stroke-width="0.9"/></svg><div style="left:872.7px;top:432.38px;width:17px;height:17px;background:#3d6fc6;border-radius:50%;"></div><div class="t" style="top:436.08px;height:9.6px;line-height:9.6px;font-size:6.6px;color:#ffffff;white-space:nowrap;left:881.2px;transform:translateX(-50%);">优雅</div><div class="t" style="top:436.28px;height:9.2px;line-height:9.2px;font-size:6.2px;color:#2e3238;white-space:nowrap;left:894.8px;-webkit-text-stroke:0.15px #2e3238;">邹优雅</div><svg style="left:1042.0px;top:436.28px;" width="7.2" height="9.2" viewBox="0 0 7.2 9.2"><rect x="2.3" y="0.5" width="2.6" height="5" rx="1.3" fill="#9698a2"/><path d="M1 4 Q1 7 3.6 7 Q6.2 7 6.2 4 M3.6 7 V8.7 M2.2 8.8 H5" fill="none" stroke="#a0a2ac" stroke-width="0.75"/><path d="M0.3 8.4 L6.9 1" stroke="#f27d7d" stroke-width="0.85"/></svg><svg style="left:1054.7px;top:437.48px;" width="9.6" height="6.8" viewBox="0 0 9.6 6.8"><rect x="0.3" y="0.9" width="6.2" height="5" rx="0.8" fill="#8a8c96"/><path d="M6.6 3.4 L9.3 1.2 V5.6 Z" fill="#8a8c96"/><path d="M0.3 6.8 L7 -0.2" stroke="#f58a8e" stroke-width="0.9"/></svg><div style="left:872.7px;top:457.61px;width:17px;height:17px;background:#3d6fc6;border-radius:50%;"></div><div class="t" style="top:461.31px;height:9.6px;line-height:9.6px;font-size:6.6px;color:#ffffff;white-space:nowrap;left:881.2px;transform:translateX(-50%);">子君</div><div class="t" style="top:461.51px;height:9.2px;line-height:9.2px;font-size:6.2px;color:#2e3238;white-space:nowrap;left:894.8px;-webkit-text-stroke:0.15px #2e3238;">杜子君</div><svg style="left:1042.0px;top:461.51px;" width="7.2" height="9.2" viewBox="0 0 7.2 9.2"><rect x="2.3" y="0.5" width="2.6" height="5" rx="1.3" fill="#9698a2"/><path d="M1 4 Q1 7 3.6 7 Q6.2 7 6.2 4 M3.6 7 V8.7 M2.2 8.8 H5" fill="none" stroke="#a0a2ac" stroke-width="0.75"/><path d="M0.3 8.4 L6.9 1" stroke="#f27d7d" stroke-width="0.85"/></svg><svg style="left:1054.7px;top:462.71000000000004px;" width="9.6" height="6.8" viewBox="0 0 9.6 6.8"><rect x="0.3" y="0.9" width="6.2" height="5" rx="0.8" fill="#8a8c96"/><path d="M6.6 3.4 L9.3 1.2 V5.6 Z" fill="#8a8c96"/><path d="M0.3 6.8 L7 -0.2" stroke="#f58a8e" stroke-width="0.9"/></svg><svg style="left:872.7px;top:482.84px;" width="17" height="17" viewBox="0 0 17 17"><defs><clipPath id="ac19"><circle cx="8.5" cy="8.5" r="8.4"/></clipPath><filter id="af19" x="-10%" y="-10%" width="120%" height="120%"><feGaussianBlur stdDeviation="0.45"/></filter></defs><g clip-path="url(#ac19)"><rect width="17" height="17" fill="#b9aea2"/><g filter="url(#af19)"><rect width="17" height="17" fill="#b9aea2"/><rect x="0" y="2.6" width="3" height="8" fill="#2f3638"/><rect x="14" y="2.6" width="3" height="8" fill="#2f3638"/><rect x="3" y="2" width="11" height="4" fill="#9fb3c6"/><rect x="2.6" y="5.6" width="11.8" height="3.4" fill="#9dbb9c"/><circle cx="4.8" cy="8" r="1" fill="#e8b82a"/><circle cx="12.2" cy="8" r="1" fill="#e8b82a"/><rect x="4" y="10.6" width="9" height="3" fill="#c9a7a7"/><ellipse cx="8.4" cy="12.4" rx="1" ry="1.4" fill="#7a1428"/><ellipse cx="8.5" cy="16.4" rx="5" ry="2" fill="#ec8a7a"/></g></g></svg><div class="t" style="top:486.74px;height:9.2px;line-height:9.2px;font-size:6.2px;color:#2e3238;white-space:nowrap;left:894.8px;-webkit-text-stroke:0.15px #2e3238;">风起13318790882</div><svg style="left:1042.0px;top:486.73999999999995px;" width="7.2" height="9.2" viewBox="0 0 7.2 9.2"><rect x="2.3" y="0.5" width="2.6" height="5" rx="1.3" fill="#9698a2"/><path d="M1 4 Q1 7 3.6 7 Q6.2 7 6.2 4 M3.6 7 V8.7 M2.2 8.8 H5" fill="none" stroke="#a0a2ac" stroke-width="0.75"/><path d="M0.3 8.4 L6.9 1" stroke="#f27d7d" stroke-width="0.85"/></svg><svg style="left:1054.7px;top:487.94px;" width="9.6" height="6.8" viewBox="0 0 9.6 6.8"><rect x="0.3" y="0.9" width="6.2" height="5" rx="0.8" fill="#8a8c96"/><path d="M6.6 3.4 L9.3 1.2 V5.6 Z" fill="#8a8c96"/><path d="M0.3 6.8 L7 -0.2" stroke="#f58a8e" stroke-width="0.9"/></svg><div class="t" style="top:486.80px;height:15.2px;line-height:15.2px;font-size:12.2px;color:#b7b9bc;white-space:nowrap;left:915.7px;">激活 Windows</div><div class="t" style="top:500.30px;height:11px;line-height:11px;font-size:8px;color:#c3c5c8;white-space:nowrap;left:915.7px;">转到"设置"以激活 Windows。</div>
</div></body></html>
